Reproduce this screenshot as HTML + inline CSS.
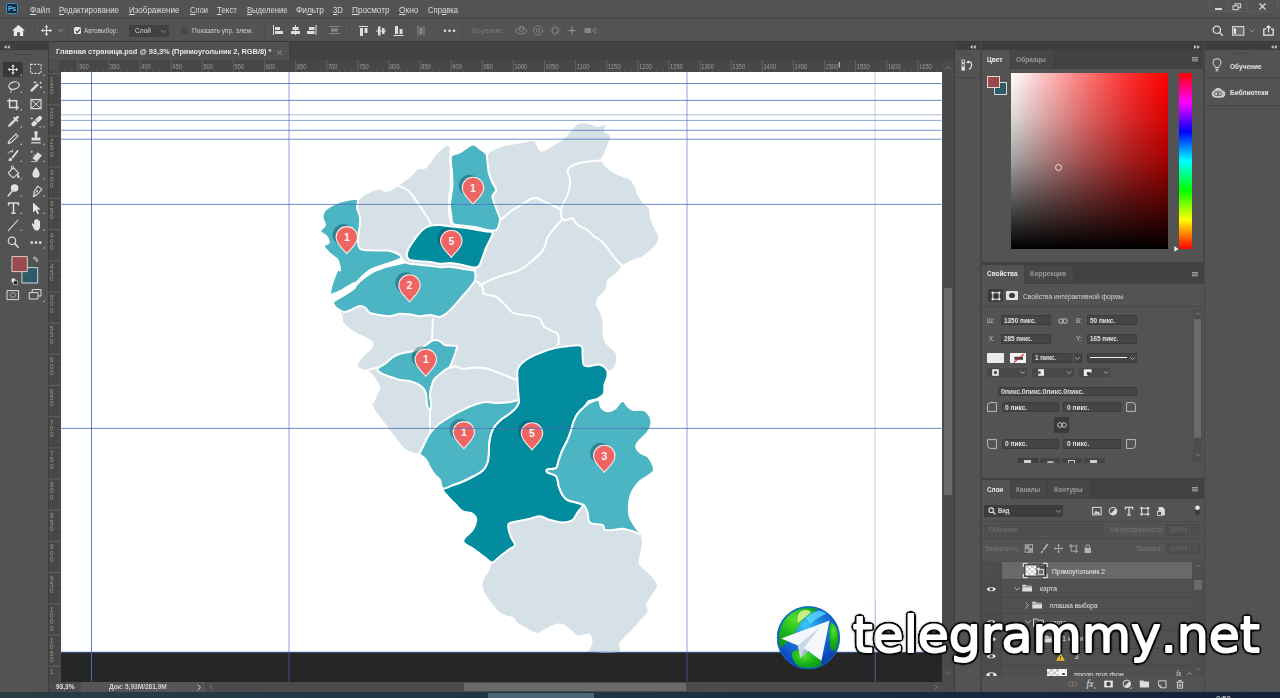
<!DOCTYPE html>
<html lang="ru">
<head>
<meta charset="utf-8">
<title>Главная страница.psd @ 93,3% (Прямоугольник 2, RGB/8)</title>
<style>
*{margin:0;padding:0;box-sizing:border-box}
html,body{width:1280px;height:698px;overflow:hidden;background:#535353}
body{position:relative;font-family:"Liberation Sans",sans-serif;color:#dcdcdc;font-size:8px;line-height:1}
.a{position:absolute}
.t{position:absolute;white-space:nowrap;line-height:10px}
.dim{color:#8e8e8e}
.b{font-weight:bold}
svg{position:absolute;overflow:visible}
.inp{position:absolute;background:#454545;border:1px solid #3c3c3c;border-radius:1px}
.sep{position:absolute;width:1px;background:#4b4b4b}
.pn{font-family:"Liberation Sans",sans-serif;font-weight:bold;font-size:10.5px}
.rl{font-family:"Liberation Sans",sans-serif;font-size:6.3px}
.fx{font-family:"Liberation Serif",serif;font-style:italic;font-size:9.5px}
.wm{font-family:"DejaVu Sans",sans-serif;font-size:50.5px;font-kerning:none}
u{text-decoration:underline;text-underline-offset:1px}
</style>
</head>
<body>
<!-- ===== menu bar ===== -->
<div class="a" style="left:0;top:0;width:1280px;height:18px;background:#535353"></div>
<div class="a" style="left:6px;top:3px;width:12px;height:11px;background:#12293a;border:1px solid #3a8fc4;border-radius:2px"></div>
<div class="t b" style="left:8px;top:3.5px;font-size:7px;color:#63b4e6;letter-spacing:-0.3px">Ps</div>
<div id="menu">
<div class="t" style="transform:scaleX(0.945);transform-origin:0 0;left:30px;top:4.5px;font-size:8.6px"><u>Ф</u>айл</div>
<div class="t" style="transform:scaleX(0.916);transform-origin:0 0;left:58.5px;top:4.5px;font-size:8.6px"><u>Р</u>едактирование</div>
<div class="t" style="transform:scaleX(0.932);transform-origin:0 0;left:128.5px;top:4.5px;font-size:8.6px"><u>И</u>зображение</div>
<div class="t" style="transform:scaleX(0.860);transform-origin:0 0;left:189.5px;top:4.5px;font-size:8.6px"><u>С</u>лои</div>
<div class="t" style="transform:scaleX(0.924);transform-origin:0 0;left:217px;top:4.5px;font-size:8.6px"><u>Т</u>екст</div>
<div class="t" style="transform:scaleX(0.889);transform-origin:0 0;left:246.5px;top:4.5px;font-size:8.6px"><u>В</u>ыделение</div>
<div class="t" style="transform:scaleX(0.969);transform-origin:0 0;left:296px;top:4.5px;font-size:8.6px">Фи<u>л</u>ьтр</div>
<div class="t" style="transform:scaleX(0.909);transform-origin:0 0;left:333px;top:4.5px;font-size:8.6px"><u>3</u>D</div>
<div class="t" style="transform:scaleX(0.955);transform-origin:0 0;left:352px;top:4.5px;font-size:8.6px"><u>П</u>росмотр</div>
<div class="t" style="transform:scaleX(0.976);transform-origin:0 0;left:399px;top:4.5px;font-size:8.6px"><u>О</u>кно</div>
<div class="t" style="transform:scaleX(0.890);transform-origin:0 0;left:428px;top:4.5px;font-size:8.6px">Спр<u>а</u>вка</div>
</div>
<!-- window controls -->
<div class="a" style="left:1209px;top:-1px;width:20px;height:13px;border:1px solid #5e5e5e;border-radius:0 0 0 3px"></div>
<div class="a" style="left:1228px;top:-1px;width:19px;height:13px;border:1px solid #5e5e5e"></div>
<div class="a" style="left:1246px;top:-1px;width:32px;height:13px;border:1px solid #5e5e5e;border-radius:0 0 3px 0"></div>
<div class="a" style="left:1215px;top:7.5px;width:7px;height:2px;background:#d6d6d6"></div>
<svg style="left:1232px;top:3px" width="10" height="8" viewBox="0 0 10 8"><path d="M3.2 2.6V.8H8.6V4.6H6.6" fill="none" stroke="#d0d0d0" stroke-width="1.1"/><rect x="1" y="2.8" width="5.2" height="3.8" fill="none" stroke="#d0d0d0" stroke-width="1.1"/></svg>
<svg style="left:1259px;top:3px" width="7" height="7" viewBox="0 0 7 7"><path d="M.5.5L6.5 6.5M6.5.5L.5 6.5" stroke="#dadada" stroke-width="1.2"/></svg>

<!-- ===== options bar ===== -->
<div class="a" style="left:0;top:18px;width:1280px;height:1px;background:#464646"></div>
<div class="a" style="left:0;top:19px;width:1280px;height:22px;background:#535353"></div>
<div class="a" style="left:0;top:41px;width:1280px;height:1px;background:#3a3a3a"></div>
<!-- home -->
<svg style="left:12px;top:25px" width="13" height="11" viewBox="0 0 13 11"><path d="M6.5 0L13 5.6H11.2V11H7.9V7.2H5.1V11H1.8V5.6H0Z" fill="#e8e8e8"/></svg>
<div class="sep" style="left:34px;top:23px;height:16px"></div>
<!-- move icon -->
<svg style="left:40.5px;top:25px" width="11" height="11" viewBox="0 0 11 11"><path d="M5.5 0L7.4 2.3H6.1V4.9H8.7V3.6L11 5.5L8.7 7.4V6.1H6.1V8.7H7.4L5.5 11L3.6 8.7H4.9V6.1H2.3V7.4L0 5.5L2.3 3.6V4.9H4.9V2.3H3.6Z" fill="#e2e2e2"/></svg>
<svg style="left:58px;top:29px" width="5" height="3" viewBox="0 0 5 3"><path d="M.3.3L2.5 2.5L4.7.3" fill="none" stroke="#a8a8a8" stroke-width=".8"/></svg>
<div class="sep" style="left:68px;top:23px;height:16px"></div>
<!-- checkbox -->
<div class="a" style="left:73.5px;top:26.5px;width:7.5px;height:7.5px;background:#e6e6e6;border-radius:1.5px"></div>
<svg style="left:74.5px;top:27.5px" width="6" height="6" viewBox="0 0 6 6"><path d="M.8 3L2.4 4.6L5.2 1.2" fill="none" stroke="#3a3a3a" stroke-width="1.2"/></svg>
<div class="t" style="transform:scaleX(0.830);transform-origin:0 0;left:84px;top:25.5px;font-size:7.6px;color:#d0d0d0">Автовыбор:</div>
<div class="a" style="left:129px;top:24.5px;width:39.5px;height:12px;background:#414141;border-radius:1.5px"></div>
<div class="t" style="transform:scaleX(0.866);transform-origin:0 0;left:134.5px;top:25.5px;font-size:7.6px;color:#d6d6d6">Слой</div>
<svg style="left:161px;top:29.5px" width="5" height="3" viewBox="0 0 5 3"><path d="M.3.3L2.5 2.5L4.7.3" fill="none" stroke="#a8a8a8" stroke-width=".8"/></svg>
<div class="a" style="left:181px;top:27px;width:7px;height:7px;background:#484848;border-radius:1.5px"></div>
<div class="t" style="transform:scaleX(0.866);transform-origin:0 0;left:191.5px;top:25.5px;font-size:7.6px;color:#d0d0d0">Показать упр. элем.</div>
<div class="sep" style="left:264px;top:23px;height:16px"></div>
<!-- align icons -->
<svg style="left:272px;top:24px" width="190" height="13" viewBox="272 24 190 13" fill="#dedede">
 <rect x="273" y="25" width="1" height="10"/><rect x="275" y="27" width="5" height="3"/><rect x="275" y="31" width="8" height="3"/>
 <rect x="295" y="25" width="1" height="10"/><rect x="292.5" y="27" width="6" height="3"/><rect x="291" y="31" width="9" height="3"/>
 <rect x="315.5" y="25" width="1" height="10"/><rect x="309" y="27" width="5.5" height="3"/><rect x="307" y="31" width="7.5" height="3"/>
 <g fill="#8a8a8a"><rect x="329.5" y="26" width="10" height="1"/><rect x="331" y="28.5" width="7" height="3"/><rect x="329.5" y="33" width="10" height="1"/></g>
 <rect x="359" y="26" width="9" height="1"/><rect x="360" y="28" width="3" height="8"/><rect x="364.5" y="28" width="3" height="5"/>
 <rect x="376" y="30.5" width="10" height="1"/><rect x="378" y="26.5" width="2.5" height="9"/><rect x="382" y="28" width="2.5" height="6"/>
 <rect x="393.5" y="35" width="10" height="1"/><rect x="395" y="26" width="3" height="8"/><rect x="399.5" y="29" width="3" height="5"/>
 <g fill="#8a8a8a"><rect x="417.5" y="26" width="1" height="10"/><rect x="419.5" y="27.5" width="3" height="7"/><rect x="423.5" y="26" width="1" height="10"/></g>
 <circle cx="445" cy="30.8" r="1.3"/><circle cx="449.5" cy="30.8" r="1.3"/><circle cx="454" cy="30.8" r="1.3"/>
</svg>
<div class="sep" style="left:349px;top:23px;height:16px"></div>
<div class="sep" style="left:462px;top:23px;height:16px"></div>
<div class="t" style="transform:scaleX(0.872);transform-origin:0 0;left:470.5px;top:25.5px;font-size:7.6px;color:#7a7a7a">3D-режим:</div>
<svg style="left:512px;top:24px" width="90" height="13" viewBox="512 24 90 13" fill="none" stroke="#848484" stroke-width="1">
 <ellipse cx="521" cy="31" rx="5.5" ry="3"/><circle cx="521.5" cy="28.8" r="2.6"/>
 <circle cx="538" cy="30.5" r="4.6"/><circle cx="538" cy="30.5" r="1.8"/>
 <path d="M555 25.5L557.5 28H552.5ZM555 35.5L557.5 33H552.5ZM550 30.5L552.5 28V33ZM560 30.5L557.5 28V33Z" stroke-width=".8"/>
 <path d="M572 26V35M567.5 30.5H576.5" stroke-width="1.1"/><rect x="570.6" y="29.1" width="2.8" height="2.8" fill="#848484" stroke="none"/>
 <rect x="584.5" y="28" width="6.5" height="5" fill="#848484" stroke="none"/><path d="M592 30.5L595.5 28V33Z" stroke-width=".8"/>
</svg>
<!-- right icons -->
<svg style="left:1212px;top:25px" width="12" height="12" viewBox="0 0 12 12"><circle cx="4.8" cy="4.8" r="3.7" fill="none" stroke="#e0e0e0" stroke-width="1.2"/><path d="M7.6 7.6L10.8 10.8" stroke="#e0e0e0" stroke-width="1.4"/></svg>
<svg style="left:1232px;top:26px" width="13" height="10" viewBox="0 0 13 10"><rect x=".6" y=".6" width="11.2" height="8.6" fill="#6a6a6a" stroke="#d8d8d8" stroke-width="1.1"/><rect x="1.8" y="2.3" width="2.2" height="5.6" fill="#e6e6e6"/></svg>
<svg style="left:1249px;top:29px" width="6" height="4" viewBox="0 0 6 4"><path d="M.4.4L3 3L5.6.4" fill="none" stroke="#9a9a9a" stroke-width=".9"/></svg>
<svg style="left:1263px;top:24.5px" width="11" height="11" viewBox="0 0 11 11"><path d="M3 4.2H.8V10.2H10.2V4.2H8" fill="none" stroke="#e6e6e6" stroke-width="1.3"/><path d="M5.5 7.4V1.4M3.4 3L5.5.8L7.6 3" fill="none" stroke="#e6e6e6" stroke-width="1.2"/></svg>

<!-- ===== strip under options: headers ===== -->
<div class="a" style="left:0;top:42px;width:1280px;height:8px;background:#3e3e3e"></div>
<!-- tools panel -->
<div class="a" style="left:0;top:50px;width:47.5px;height:642px;background:#535353"></div>
<div class="a" style="left:47.5px;top:42px;width:1px;height:650px;background:#3e3e3e"></div>
<svg style="left:4px;top:44.5px" width="6" height="4" viewBox="0 0 6 4" fill="#c8c8c8"><path d="M2.6 0V4L0 2ZM5.8 0V4L3.2 2Z"/></svg>
<div class="a" style="left:15px;top:53.5px;width:17px;height:1px;background:#474747"></div>
<!-- tab bar -->
<div class="a" style="left:48.5px;top:42px;width:905px;height:17.8px;background:#424242"></div>
<div class="a" style="left:48.5px;top:42px;width:240px;height:17.8px;background:#515151"></div>
<div class="t b" style="transform:scaleX(0.947);transform-origin:0 0;left:56px;top:46.5px;font-size:7.9px;color:#e4e4e4;letter-spacing:-.05px">Главная страница.psd @ 93,3% (Прямоугольник 2, RGB/8) *</div>
<svg style="left:277px;top:49.5px" width="5" height="5" viewBox="0 0 5 5"><path d="M.4.4L4.6 4.6M4.6.4L.4 4.6" stroke="#a0a0a0" stroke-width=".9"/></svg>
<!-- ===== tools ===== -->
<div class="a" style="left:3px;top:61.5px;width:20px;height:15.5px;background:#383838;border-radius:1px"></div>
<svg style="left:0;top:56px" width="48" height="250" viewBox="0 56 48 250" fill="none" stroke="#dcdcdc" stroke-width="1.2" stroke-linecap="round" stroke-linejoin="round">
<!-- row1: move / marquee  y=69.5 -->
<path d="M13 64.3L14.8 66.5H13.6V68.9H16V67.7L18.2 69.5L16 71.3V70.1H13.6V72.5H14.8L13 74.7L11.2 72.5H12.4V70.1H10V71.3L7.8 69.5L10 67.7V68.9H12.4V66.5H11.2Z" fill="#e8e8e8" stroke="none"/>
<rect x="30.6" y="64.4" width="10.4" height="9" stroke-dasharray="2 1.4" stroke-width="1.1" stroke-linecap="butt"/>
<!-- row2: lasso / wand  y=86.7 -->
<ellipse cx="14" cy="85.6" rx="5.3" ry="3.6" transform="rotate(-14 14 85.6)"/><path d="M9.6 88.2C9.2 89.6 10.8 90 11.4 89.2C11.6 90.6 11.3 91.6 10.6 92.4" stroke-width="1"/>
<path d="M31 91.2L38 84.2" stroke-width="2.4" stroke-linecap="butt"/><path d="M35 81.6V83M33.6 82.3H36.4M40.6 82V83.6M39.8 82.8H41.4M41 86.6V88M40.3 87.3H41.7" stroke-width=".8"/>
<!-- row3: crop / frame  y=104 -->
<path d="M9.6 98.4V107.6H19M7.2 100.8H16.6V110" stroke-width="1.5" stroke-linecap="butt" stroke-linejoin="miter"/>
<rect x="31" y="99.6" width="10" height="9" stroke-width="1.2"/><path d="M31 99.6L41 108.6M41 99.6L31 108.6" stroke-width="1"/>
<!-- row4: eyedropper / healing  y=121 -->
<path d="M8.6 126.4L9 124.6L14.4 119.2L15.8 120.6L10.4 126Z" fill="#dcdcdc" stroke-width=".6"/><path d="M14 117.6L17.4 121" stroke-width="1.6"/><path d="M15.6 119.2L17.6 117.2" stroke-width="2.6"/>
<path d="M32 124.4L38.4 118A2 2 0 0 1 41.4 121L35 127.4A2 2 0 0 1 32 124.4Z" fill="#dcdcdc" stroke="none" transform="translate(0 -1.6)"/><path d="M34.6 121.4L38 124.8" stroke="#535353" stroke-width=".9" transform="translate(0 -1.6)"/><path d="M31 118.4H32.6M39.6 127H41.2M31.8 117.6V119.2" stroke-width=".7"/>
<!-- row5: pencil / stamp  y=138 -->
<path d="M8.4 143.6L9.2 140.6L16 133.8L18 135.8L11.2 142.6Z" stroke-width="1.1"/><path d="M8.4 143.6L10 143.2L8.8 142Z" fill="#dcdcdc" stroke-width=".6"/>
<path d="M34.4 133.6A1.8 1.8 0 1 1 37.6 133.6L37 137.4H40.4V140.4H31.6V137.4H35Z" fill="#dcdcdc" stroke="none"/><path d="M31.2 142.8H40.8" stroke-width="1.3" stroke-linecap="butt"/>
<!-- row6: history brush / eraser  y=156 -->
<path d="M8.6 161C8.6 159 9.4 158.2 10.6 157.6L12.4 159.4C12 160.6 10.8 161.4 8.6 161Z" fill="#dcdcdc" stroke="none"/><path d="M12.6 157.4L17.6 151" stroke-width="1.8"/><path d="M8 153.6A3.4 3.4 0 0 1 12.4 151.4M12.6 150V151.8H10.8" stroke-width=".8"/>
<path d="M32.4 158.2L37.6 152.2L42 155.6L36.8 161.6Z" fill="#dcdcdc" stroke="none"/><path d="M31.4 161.6H37" stroke-width=".8"/><path d="M31 151.8H32.4M31.7 151.1V152.5M33.4 155H34.4" stroke-width=".7"/>
<!-- row7: bucket / blur  y=173 -->
<path d="M9 172L13.4 167.6L18.6 172.8L14.2 177.2C13.6 177.8 12.8 177.8 12.2 177.2L9 174C8.4 173.4 8.4 172.6 9 172Z" stroke-width="1.1"/><path d="M11.4 169.6V166.8C11.4 165.6 13.4 165.6 13.4 166.8V169" stroke-width=".9"/><path d="M17.8 173.4C19 175 19.6 176 19.6 176.8A1.2 1.2 0 0 1 17.2 176.8C17.2 176 17.4 175 17.8 173.4Z" fill="#dcdcdc" stroke="none"/>
<path d="M36 167C38 170 39.6 172.2 39.6 174.2A3.6 3.6 0 0 1 32.4 174.2C32.4 172.2 34 170 36 167Z" fill="#e2e2e2" stroke="none"/>
<!-- row8: dodge / pen  y=191 -->
<circle cx="14.6" cy="188" r="3.8" fill="#e2e2e2" stroke="none"/><path d="M12.2 191L8.2 196" stroke-width="1.6"/>
<path d="M33 196.4L34 191.2L38.4 186.4L42 190L37.2 194.4Z" stroke-width="1.1" transform="rotate(-8 36 191)"/><circle cx="37" cy="191" r="1" fill="#dcdcdc" stroke="none"/><path d="M33 196.4L36.4 191.8" stroke-width=".8"/>
<!-- row9: type / path select  y=208 -->
<path d="M8.6 205.6V203H18.4V205.6M13.5 203V213M11.4 213.2H15.6" stroke-width="1.5" stroke-linecap="butt" stroke-linejoin="miter"/>
<path d="M33 202.4V212.6L35.6 210.2L37.4 214.2L39 213.4L37.2 209.6H40.6Z" fill="#e6e6e6" stroke="none"/>
<!-- row10: line / hand  y=225 -->
<path d="M8.4 230.6L18 220" stroke-width="1.1"/>
<path d="M32.6 226C32 224.8 31.2 224 32 223.4C32.8 222.8 33.6 224 34.2 224.8V220.4C34.2 219.4 35.6 219.4 35.6 220.4V219.4C35.6 218.4 37.1 218.4 37.1 219.4V220C37.1 219 38.6 219 38.6 220V221.2C38.6 220.4 40 220.4 40 221.4V226.4C40 229 38.6 230.6 36.6 230.6C34.4 230.6 33.6 228.6 32.6 226Z" fill="#e2e2e2" stroke="none"/>
<!-- row11: zoom / more  y=242.7 -->
<circle cx="12" cy="240.8" r="3.7" stroke-width="1.2"/><path d="M14.8 243.6L18.2 247.2" stroke-width="1.6"/>
<g fill="#e2e2e2" stroke="none"><circle cx="31.8" cy="242.6" r="1.3"/><circle cx="36" cy="242.6" r="1.3"/><circle cx="40.2" cy="242.6" r="1.3"/></g>
<!-- corner triangles -->
<g fill="#b4b4b4" stroke="none">
<path d="M22 74V76H20ZM44.6 74V76H42.6ZM22 91V93H20ZM44.6 91V93H42.6ZM22 108.4V110.4H20ZM22 125.6V127.6H20ZM44.6 125.6V127.6H42.6ZM22 143V145H20ZM44.6 143V145H42.6ZM22 160V162H20ZM44.6 160V162H42.6ZM22 177.4V179.4H20ZM44.6 177.4V179.4H42.6ZM22 194.6V196.6H20ZM44.6 194.6V196.6H42.6ZM22 212V214H20ZM44.6 212V214H42.6ZM22 229V231H20ZM44.6 229V231H42.6ZM44.6 246.4V248.4H42.6ZM44.6 300V302H42.6Z"/>
</g>
<!-- swatches -->
<rect x="22.3" y="267.6" width="15.4" height="15.4" fill="#2e5c66" stroke="#e0e0e0" stroke-width=".9"/>
<rect x="12.3" y="256.6" width="15" height="15" fill="#9a4a50" stroke="#e6dcd4" stroke-width=".9"/>
<path d="M33.6 258H36.8V261.4M35.4 260L36.8 261.6L38.2 260M34.8 256.8L33.4 258L34.8 259.2" stroke-width=".8"/>
<rect x="11.6" y="278.6" width="3.6" height="3.6" fill="#e6e6e6" stroke="none"/><rect x="13.8" y="280.8" width="3.8" height="3.8" fill="#1e1e1e" stroke="#e6e6e6" stroke-width=".6"/>
<!-- quick mask / screen mode -->
<rect x="7.4" y="290.6" width="11.2" height="9" stroke-width="1"/><ellipse cx="13" cy="295" rx="2.8" ry="2.2" stroke-width=".7" stroke-dasharray="1 .8"/>
<rect x="32.6" y="289.6" width="8.4" height="6.4" stroke-width="1"/><rect x="29.6" y="292.6" width="8.4" height="6.4" fill="#535353" stroke-width="1"/>
</svg>
<!-- ===== document window ===== -->
<div class="a" style="left:48.5px;top:59.7px;width:905px;height:12.5px;background:#474747"></div>
<div class="a" style="left:48.5px;top:59.7px;width:12px;height:622px;background:#474747"></div>
<div class="a" style="left:49px;top:60.5px;width:10.3px;height:10.8px;background:#4f4f4f"></div>
<div class="a" style="left:60.5px;top:72px;width:881px;height:580px;background:#fff"></div>
<div class="a" style="left:60.5px;top:652px;width:881px;height:29.5px;background:#262626"></div>
<div class="a" style="left:941.5px;top:60.5px;width:12px;height:621px;background:#4a4a4a"></div>
<div class="a" style="left:943.5px;top:288px;width:8.5px;height:206.5px;background:#6a6a6a"></div>
<svg style="left:944px;top:66px" width="7" height="4" viewBox="0 0 7 4"><path d="M.5 3.5L3.5.7L6.5 3.5" fill="none" stroke="#7c7c7c" stroke-width=".9"/></svg>
<svg style="left:944px;top:671px" width="7" height="4" viewBox="0 0 7 4"><path d="M.5.5L3.5 3.3L6.5.5" fill="none" stroke="#7c7c7c" stroke-width=".9"/></svg>
<div class="a" style="left:953.5px;top:42px;width:1px;height:650px;background:#3e3e3e"></div>
<svg style="left:0;top:0;opacity:.99" width="960" height="698" viewBox="0 0 960 698">
<g stroke="#686868" stroke-width=".8">
<path d="M65.5 69.5V72" stroke="#5c5c5c"/>
<path d="M71.7 69.5V72" stroke="#5c5c5c"/>
<path d="M77.9 59.8V72"/>
<path d="M84.1 69.5V72" stroke="#5c5c5c"/>
<path d="M90.3 69.5V72" stroke="#5c5c5c"/>
<path d="M96.6 69.5V72" stroke="#5c5c5c"/>
<path d="M102.8 69.5V72" stroke="#5c5c5c"/>
<path d="M109.0 59.8V72"/>
<path d="M115.2 69.5V72" stroke="#5c5c5c"/>
<path d="M121.5 69.5V72" stroke="#5c5c5c"/>
<path d="M127.7 69.5V72" stroke="#5c5c5c"/>
<path d="M133.9 69.5V72" stroke="#5c5c5c"/>
<path d="M140.1 59.8V72"/>
<path d="M146.3 69.5V72" stroke="#5c5c5c"/>
<path d="M152.6 69.5V72" stroke="#5c5c5c"/>
<path d="M158.8 69.5V72" stroke="#5c5c5c"/>
<path d="M165.0 69.5V72" stroke="#5c5c5c"/>
<path d="M171.2 59.8V72"/>
<path d="M177.5 69.5V72" stroke="#5c5c5c"/>
<path d="M183.7 69.5V72" stroke="#5c5c5c"/>
<path d="M189.9 69.5V72" stroke="#5c5c5c"/>
<path d="M196.1 69.5V72" stroke="#5c5c5c"/>
<path d="M202.3 59.8V72"/>
<path d="M208.6 69.5V72" stroke="#5c5c5c"/>
<path d="M214.8 69.5V72" stroke="#5c5c5c"/>
<path d="M221.0 69.5V72" stroke="#5c5c5c"/>
<path d="M227.2 69.5V72" stroke="#5c5c5c"/>
<path d="M233.4 59.8V72"/>
<path d="M239.7 69.5V72" stroke="#5c5c5c"/>
<path d="M245.9 69.5V72" stroke="#5c5c5c"/>
<path d="M252.1 69.5V72" stroke="#5c5c5c"/>
<path d="M258.3 69.5V72" stroke="#5c5c5c"/>
<path d="M264.6 59.8V72"/>
<path d="M270.8 69.5V72" stroke="#5c5c5c"/>
<path d="M277.0 69.5V72" stroke="#5c5c5c"/>
<path d="M283.2 69.5V72" stroke="#5c5c5c"/>
<path d="M289.4 69.5V72" stroke="#5c5c5c"/>
<path d="M295.7 59.8V72"/>
<path d="M301.9 69.5V72" stroke="#5c5c5c"/>
<path d="M308.1 69.5V72" stroke="#5c5c5c"/>
<path d="M314.3 69.5V72" stroke="#5c5c5c"/>
<path d="M320.6 69.5V72" stroke="#5c5c5c"/>
<path d="M326.8 59.8V72"/>
<path d="M333.0 69.5V72" stroke="#5c5c5c"/>
<path d="M339.2 69.5V72" stroke="#5c5c5c"/>
<path d="M345.4 69.5V72" stroke="#5c5c5c"/>
<path d="M351.7 69.5V72" stroke="#5c5c5c"/>
<path d="M357.9 59.8V72"/>
<path d="M364.1 69.5V72" stroke="#5c5c5c"/>
<path d="M370.3 69.5V72" stroke="#5c5c5c"/>
<path d="M376.6 69.5V72" stroke="#5c5c5c"/>
<path d="M382.8 69.5V72" stroke="#5c5c5c"/>
<path d="M389.0 59.8V72"/>
<path d="M395.2 69.5V72" stroke="#5c5c5c"/>
<path d="M401.4 69.5V72" stroke="#5c5c5c"/>
<path d="M407.7 69.5V72" stroke="#5c5c5c"/>
<path d="M413.9 69.5V72" stroke="#5c5c5c"/>
<path d="M420.1 59.8V72"/>
<path d="M426.3 69.5V72" stroke="#5c5c5c"/>
<path d="M432.6 69.5V72" stroke="#5c5c5c"/>
<path d="M438.8 69.5V72" stroke="#5c5c5c"/>
<path d="M445.0 69.5V72" stroke="#5c5c5c"/>
<path d="M451.2 59.8V72"/>
<path d="M457.4 69.5V72" stroke="#5c5c5c"/>
<path d="M463.7 69.5V72" stroke="#5c5c5c"/>
<path d="M469.9 69.5V72" stroke="#5c5c5c"/>
<path d="M476.1 69.5V72" stroke="#5c5c5c"/>
<path d="M482.3 59.8V72"/>
<path d="M488.6 69.5V72" stroke="#5c5c5c"/>
<path d="M494.8 69.5V72" stroke="#5c5c5c"/>
<path d="M501.0 69.5V72" stroke="#5c5c5c"/>
<path d="M507.2 69.5V72" stroke="#5c5c5c"/>
<path d="M513.4 59.8V72"/>
<path d="M519.7 69.5V72" stroke="#5c5c5c"/>
<path d="M525.9 69.5V72" stroke="#5c5c5c"/>
<path d="M532.1 69.5V72" stroke="#5c5c5c"/>
<path d="M538.3 69.5V72" stroke="#5c5c5c"/>
<path d="M544.5 59.8V72"/>
<path d="M550.8 69.5V72" stroke="#5c5c5c"/>
<path d="M557.0 69.5V72" stroke="#5c5c5c"/>
<path d="M563.2 69.5V72" stroke="#5c5c5c"/>
<path d="M569.4 69.5V72" stroke="#5c5c5c"/>
<path d="M575.7 59.8V72"/>
<path d="M581.9 69.5V72" stroke="#5c5c5c"/>
<path d="M588.1 69.5V72" stroke="#5c5c5c"/>
<path d="M594.3 69.5V72" stroke="#5c5c5c"/>
<path d="M600.5 69.5V72" stroke="#5c5c5c"/>
<path d="M606.8 59.8V72"/>
<path d="M613.0 69.5V72" stroke="#5c5c5c"/>
<path d="M619.2 69.5V72" stroke="#5c5c5c"/>
<path d="M625.4 69.5V72" stroke="#5c5c5c"/>
<path d="M631.7 69.5V72" stroke="#5c5c5c"/>
<path d="M637.9 59.8V72"/>
<path d="M644.1 69.5V72" stroke="#5c5c5c"/>
<path d="M650.3 69.5V72" stroke="#5c5c5c"/>
<path d="M656.5 69.5V72" stroke="#5c5c5c"/>
<path d="M662.8 69.5V72" stroke="#5c5c5c"/>
<path d="M669.0 59.8V72"/>
<path d="M675.2 69.5V72" stroke="#5c5c5c"/>
<path d="M681.4 69.5V72" stroke="#5c5c5c"/>
<path d="M687.7 69.5V72" stroke="#5c5c5c"/>
<path d="M693.9 69.5V72" stroke="#5c5c5c"/>
<path d="M700.1 59.8V72"/>
<path d="M706.3 69.5V72" stroke="#5c5c5c"/>
<path d="M712.5 69.5V72" stroke="#5c5c5c"/>
<path d="M718.8 69.5V72" stroke="#5c5c5c"/>
<path d="M725.0 69.5V72" stroke="#5c5c5c"/>
<path d="M731.2 59.8V72"/>
<path d="M737.4 69.5V72" stroke="#5c5c5c"/>
<path d="M743.7 69.5V72" stroke="#5c5c5c"/>
<path d="M749.9 69.5V72" stroke="#5c5c5c"/>
<path d="M756.1 69.5V72" stroke="#5c5c5c"/>
<path d="M762.3 59.8V72"/>
<path d="M768.5 69.5V72" stroke="#5c5c5c"/>
<path d="M774.8 69.5V72" stroke="#5c5c5c"/>
<path d="M781.0 69.5V72" stroke="#5c5c5c"/>
<path d="M787.2 69.5V72" stroke="#5c5c5c"/>
<path d="M793.4 59.8V72"/>
<path d="M799.7 69.5V72" stroke="#5c5c5c"/>
<path d="M805.9 69.5V72" stroke="#5c5c5c"/>
<path d="M812.1 69.5V72" stroke="#5c5c5c"/>
<path d="M818.3 69.5V72" stroke="#5c5c5c"/>
<path d="M824.5 59.8V72"/>
<path d="M830.8 69.5V72" stroke="#5c5c5c"/>
<path d="M837.0 69.5V72" stroke="#5c5c5c"/>
<path d="M843.2 69.5V72" stroke="#5c5c5c"/>
<path d="M849.4 69.5V72" stroke="#5c5c5c"/>
<path d="M855.6 59.8V72"/>
<path d="M861.9 69.5V72" stroke="#5c5c5c"/>
<path d="M868.1 69.5V72" stroke="#5c5c5c"/>
<path d="M874.3 69.5V72" stroke="#5c5c5c"/>
<path d="M880.5 69.5V72" stroke="#5c5c5c"/>
<path d="M886.8 59.8V72"/>
<path d="M893.0 69.5V72" stroke="#5c5c5c"/>
<path d="M899.2 69.5V72" stroke="#5c5c5c"/>
<path d="M905.4 69.5V72" stroke="#5c5c5c"/>
<path d="M911.6 69.5V72" stroke="#5c5c5c"/>
<path d="M917.9 59.8V72"/>
<path d="M924.1 69.5V72" stroke="#5c5c5c"/>
<path d="M930.3 69.5V72" stroke="#5c5c5c"/>
<path d="M936.5 69.5V72" stroke="#5c5c5c"/>
<path d="M48.5 73.7H60.5"/>
<path d="M58 79.9H60.5" stroke="#5c5c5c"/>
<path d="M58 86.2H60.5" stroke="#5c5c5c"/>
<path d="M58 92.4H60.5" stroke="#5c5c5c"/>
<path d="M58 98.6H60.5" stroke="#5c5c5c"/>
<path d="M48.5 104.9H60.5"/>
<path d="M58 111.1H60.5" stroke="#5c5c5c"/>
<path d="M58 117.4H60.5" stroke="#5c5c5c"/>
<path d="M58 123.6H60.5" stroke="#5c5c5c"/>
<path d="M58 129.8H60.5" stroke="#5c5c5c"/>
<path d="M48.5 136.1H60.5"/>
<path d="M58 142.3H60.5" stroke="#5c5c5c"/>
<path d="M58 148.5H60.5" stroke="#5c5c5c"/>
<path d="M58 154.8H60.5" stroke="#5c5c5c"/>
<path d="M58 161.0H60.5" stroke="#5c5c5c"/>
<path d="M48.5 167.2H60.5"/>
<path d="M58 173.5H60.5" stroke="#5c5c5c"/>
<path d="M58 179.7H60.5" stroke="#5c5c5c"/>
<path d="M58 185.9H60.5" stroke="#5c5c5c"/>
<path d="M58 192.2H60.5" stroke="#5c5c5c"/>
<path d="M48.5 198.4H60.5"/>
<path d="M58 204.7H60.5" stroke="#5c5c5c"/>
<path d="M58 210.9H60.5" stroke="#5c5c5c"/>
<path d="M58 217.1H60.5" stroke="#5c5c5c"/>
<path d="M58 223.4H60.5" stroke="#5c5c5c"/>
<path d="M48.5 229.6H60.5"/>
<path d="M58 235.8H60.5" stroke="#5c5c5c"/>
<path d="M58 242.1H60.5" stroke="#5c5c5c"/>
<path d="M58 248.3H60.5" stroke="#5c5c5c"/>
<path d="M58 254.5H60.5" stroke="#5c5c5c"/>
<path d="M48.5 260.8H60.5"/>
<path d="M58 267.0H60.5" stroke="#5c5c5c"/>
<path d="M58 273.3H60.5" stroke="#5c5c5c"/>
<path d="M58 279.5H60.5" stroke="#5c5c5c"/>
<path d="M58 285.7H60.5" stroke="#5c5c5c"/>
<path d="M48.5 292.0H60.5"/>
<path d="M58 298.2H60.5" stroke="#5c5c5c"/>
<path d="M58 304.4H60.5" stroke="#5c5c5c"/>
<path d="M58 310.7H60.5" stroke="#5c5c5c"/>
<path d="M58 316.9H60.5" stroke="#5c5c5c"/>
<path d="M48.5 323.1H60.5"/>
<path d="M58 329.4H60.5" stroke="#5c5c5c"/>
<path d="M58 335.6H60.5" stroke="#5c5c5c"/>
<path d="M58 341.8H60.5" stroke="#5c5c5c"/>
<path d="M58 348.1H60.5" stroke="#5c5c5c"/>
<path d="M48.5 354.3H60.5"/>
<path d="M58 360.6H60.5" stroke="#5c5c5c"/>
<path d="M58 366.8H60.5" stroke="#5c5c5c"/>
<path d="M58 373.0H60.5" stroke="#5c5c5c"/>
<path d="M58 379.3H60.5" stroke="#5c5c5c"/>
<path d="M48.5 385.5H60.5"/>
<path d="M58 391.7H60.5" stroke="#5c5c5c"/>
<path d="M58 398.0H60.5" stroke="#5c5c5c"/>
<path d="M58 404.2H60.5" stroke="#5c5c5c"/>
<path d="M58 410.4H60.5" stroke="#5c5c5c"/>
<path d="M48.5 416.7H60.5"/>
<path d="M58 422.9H60.5" stroke="#5c5c5c"/>
<path d="M58 429.2H60.5" stroke="#5c5c5c"/>
<path d="M58 435.4H60.5" stroke="#5c5c5c"/>
<path d="M58 441.6H60.5" stroke="#5c5c5c"/>
<path d="M48.5 447.9H60.5"/>
<path d="M58 454.1H60.5" stroke="#5c5c5c"/>
<path d="M58 460.3H60.5" stroke="#5c5c5c"/>
<path d="M58 466.6H60.5" stroke="#5c5c5c"/>
<path d="M58 472.8H60.5" stroke="#5c5c5c"/>
<path d="M48.5 479.0H60.5"/>
<path d="M58 485.3H60.5" stroke="#5c5c5c"/>
<path d="M58 491.5H60.5" stroke="#5c5c5c"/>
<path d="M58 497.7H60.5" stroke="#5c5c5c"/>
<path d="M58 504.0H60.5" stroke="#5c5c5c"/>
<path d="M48.5 510.2H60.5"/>
<path d="M58 516.5H60.5" stroke="#5c5c5c"/>
<path d="M58 522.7H60.5" stroke="#5c5c5c"/>
<path d="M58 528.9H60.5" stroke="#5c5c5c"/>
<path d="M58 535.2H60.5" stroke="#5c5c5c"/>
<path d="M48.5 541.4H60.5"/>
<path d="M58 547.6H60.5" stroke="#5c5c5c"/>
<path d="M58 553.9H60.5" stroke="#5c5c5c"/>
<path d="M58 560.1H60.5" stroke="#5c5c5c"/>
<path d="M58 566.3H60.5" stroke="#5c5c5c"/>
<path d="M48.5 572.6H60.5"/>
<path d="M58 578.8H60.5" stroke="#5c5c5c"/>
<path d="M58 585.1H60.5" stroke="#5c5c5c"/>
<path d="M58 591.3H60.5" stroke="#5c5c5c"/>
<path d="M58 597.5H60.5" stroke="#5c5c5c"/>
<path d="M48.5 603.8H60.5"/>
<path d="M58 610.0H60.5" stroke="#5c5c5c"/>
<path d="M58 616.2H60.5" stroke="#5c5c5c"/>
<path d="M58 622.5H60.5" stroke="#5c5c5c"/>
<path d="M58 628.7H60.5" stroke="#5c5c5c"/>
<path d="M48.5 634.9H60.5"/>
<path d="M58 641.2H60.5" stroke="#5c5c5c"/>
<path d="M58 647.4H60.5" stroke="#5c5c5c"/>
<path d="M58 653.6H60.5" stroke="#5c5c5c"/>
<path d="M58 659.9H60.5" stroke="#5c5c5c"/>
<path d="M48.5 666.1H60.5"/>
<path d="M58 672.4H60.5" stroke="#5c5c5c"/>
<path d="M58 678.6H60.5" stroke="#5c5c5c"/>
</g>
<path d="M839.3 62V67.5" stroke="#e0e0e0" stroke-width=".9"/>
<g class="rl" fill="#9c9c9c">
<text x="79.0" y="68.6" textLength="9.6" lengthAdjust="spacingAndGlyphs">300</text>
<text x="110.1" y="68.6" textLength="9.6" lengthAdjust="spacingAndGlyphs">350</text>
<text x="141.2" y="68.6" textLength="9.6" lengthAdjust="spacingAndGlyphs">400</text>
<text x="172.3" y="68.6" textLength="9.6" lengthAdjust="spacingAndGlyphs">450</text>
<text x="203.4" y="68.6" textLength="9.6" lengthAdjust="spacingAndGlyphs">500</text>
<text x="234.5" y="68.6" textLength="9.6" lengthAdjust="spacingAndGlyphs">550</text>
<text x="265.7" y="68.6" textLength="9.6" lengthAdjust="spacingAndGlyphs">600</text>
<text x="296.8" y="68.6" textLength="9.6" lengthAdjust="spacingAndGlyphs">650</text>
<text x="327.9" y="68.6" textLength="9.6" lengthAdjust="spacingAndGlyphs">700</text>
<text x="359.0" y="68.6" textLength="9.6" lengthAdjust="spacingAndGlyphs">750</text>
<text x="390.1" y="68.6" textLength="9.6" lengthAdjust="spacingAndGlyphs">800</text>
<text x="421.2" y="68.6" textLength="9.6" lengthAdjust="spacingAndGlyphs">850</text>
<text x="452.3" y="68.6" textLength="9.6" lengthAdjust="spacingAndGlyphs">900</text>
<text x="483.4" y="68.6" textLength="9.6" lengthAdjust="spacingAndGlyphs">950</text>
<text x="514.5" y="68.6" textLength="12.8" lengthAdjust="spacingAndGlyphs">1000</text>
<text x="545.6" y="68.6" textLength="12.8" lengthAdjust="spacingAndGlyphs">1050</text>
<text x="576.8" y="68.6" textLength="12.8" lengthAdjust="spacingAndGlyphs">1100</text>
<text x="607.9" y="68.6" textLength="12.8" lengthAdjust="spacingAndGlyphs">1150</text>
<text x="639.0" y="68.6" textLength="12.8" lengthAdjust="spacingAndGlyphs">1200</text>
<text x="670.1" y="68.6" textLength="12.8" lengthAdjust="spacingAndGlyphs">1250</text>
<text x="701.2" y="68.6" textLength="12.8" lengthAdjust="spacingAndGlyphs">1300</text>
<text x="732.3" y="68.6" textLength="12.8" lengthAdjust="spacingAndGlyphs">1350</text>
<text x="763.4" y="68.6" textLength="12.8" lengthAdjust="spacingAndGlyphs">1400</text>
<text x="794.5" y="68.6" textLength="12.8" lengthAdjust="spacingAndGlyphs">1450</text>
<text x="825.6" y="68.6" textLength="12.8" lengthAdjust="spacingAndGlyphs">1500</text>
<text x="856.8" y="68.6" textLength="12.8" lengthAdjust="spacingAndGlyphs">1550</text>
<text x="887.9" y="68.6" textLength="12.8" lengthAdjust="spacingAndGlyphs">1600</text>
<text x="919.0" y="68.6" textLength="12.8" lengthAdjust="spacingAndGlyphs">1650</text>
<text x="51.8" y="81.7" text-anchor="middle">1</text>
<text x="51.8" y="88.0" text-anchor="middle">5</text>
<text x="51.8" y="94.3" text-anchor="middle">0</text>
<text x="51.8" y="112.9" text-anchor="middle">2</text>
<text x="51.8" y="119.2" text-anchor="middle">0</text>
<text x="51.8" y="125.5" text-anchor="middle">0</text>
<text x="51.8" y="144.1" text-anchor="middle">2</text>
<text x="51.8" y="150.4" text-anchor="middle">5</text>
<text x="51.8" y="156.7" text-anchor="middle">0</text>
<text x="51.8" y="175.2" text-anchor="middle">3</text>
<text x="51.8" y="181.5" text-anchor="middle">0</text>
<text x="51.8" y="187.8" text-anchor="middle">0</text>
<text x="51.8" y="206.4" text-anchor="middle">3</text>
<text x="51.8" y="212.7" text-anchor="middle">5</text>
<text x="51.8" y="219.0" text-anchor="middle">0</text>
<text x="51.8" y="237.6" text-anchor="middle">4</text>
<text x="51.8" y="243.9" text-anchor="middle">0</text>
<text x="51.8" y="250.2" text-anchor="middle">0</text>
<text x="51.8" y="268.8" text-anchor="middle">4</text>
<text x="51.8" y="275.1" text-anchor="middle">5</text>
<text x="51.8" y="281.4" text-anchor="middle">0</text>
<text x="51.8" y="300.0" text-anchor="middle">5</text>
<text x="51.8" y="306.3" text-anchor="middle">0</text>
<text x="51.8" y="312.6" text-anchor="middle">0</text>
<text x="51.8" y="331.1" text-anchor="middle">5</text>
<text x="51.8" y="337.4" text-anchor="middle">5</text>
<text x="51.8" y="343.7" text-anchor="middle">0</text>
<text x="51.8" y="362.3" text-anchor="middle">6</text>
<text x="51.8" y="368.6" text-anchor="middle">0</text>
<text x="51.8" y="374.9" text-anchor="middle">0</text>
<text x="51.8" y="393.5" text-anchor="middle">6</text>
<text x="51.8" y="399.8" text-anchor="middle">5</text>
<text x="51.8" y="406.1" text-anchor="middle">0</text>
<text x="51.8" y="424.7" text-anchor="middle">7</text>
<text x="51.8" y="431.0" text-anchor="middle">0</text>
<text x="51.8" y="437.3" text-anchor="middle">0</text>
<text x="51.8" y="455.9" text-anchor="middle">7</text>
<text x="51.8" y="462.2" text-anchor="middle">5</text>
<text x="51.8" y="468.5" text-anchor="middle">0</text>
<text x="51.8" y="487.0" text-anchor="middle">8</text>
<text x="51.8" y="493.3" text-anchor="middle">0</text>
<text x="51.8" y="499.6" text-anchor="middle">0</text>
<text x="51.8" y="518.2" text-anchor="middle">8</text>
<text x="51.8" y="524.5" text-anchor="middle">5</text>
<text x="51.8" y="530.8" text-anchor="middle">0</text>
<text x="51.8" y="549.4" text-anchor="middle">9</text>
<text x="51.8" y="555.7" text-anchor="middle">0</text>
<text x="51.8" y="562.0" text-anchor="middle">0</text>
<text x="51.8" y="580.6" text-anchor="middle">9</text>
<text x="51.8" y="586.9" text-anchor="middle">5</text>
<text x="51.8" y="593.2" text-anchor="middle">0</text>
<text x="51.8" y="611.8" text-anchor="middle">1</text>
<text x="51.8" y="618.1" text-anchor="middle">0</text>
<text x="51.8" y="624.4" text-anchor="middle">0</text>
<text x="51.8" y="630.7" text-anchor="middle">0</text>
<text x="51.8" y="642.9" text-anchor="middle">1</text>
<text x="51.8" y="649.2" text-anchor="middle">0</text>
<text x="51.8" y="655.5" text-anchor="middle">5</text>
<text x="51.8" y="661.8" text-anchor="middle">0</text>
<text x="51.8" y="674.1" text-anchor="middle">1</text>
</g>
</svg>
<svg style="left:0;top:0" width="960" height="698" viewBox="0 0 960 698">
<path d="M335 203.8C338.2 202.3 341.4 201.2 345 200.5C348.6 199.8 355.4 199.4 357.5 199.5C359.6 199.6 356.8 201.9 358 201.2C359.2 200.5 362.3 196.7 365 195C367.7 193.3 372.6 191.4 375 190.5C377.4 189.6 378.4 189.3 380 189.5C381.6 189.7 383.0 191.9 385 192C387.0 192.1 390.3 191.0 392.5 190C394.7 189.0 396.0 187.8 398.8 185.8C401.6 183.8 407.0 180.0 410 177.5C413.0 175.0 415.1 171.4 417.5 170C419.9 168.6 423.0 169.8 425 168.8C427.0 167.8 428.2 166.0 430 163.8C431.8 161.6 434.4 157.2 436.2 155C438.0 152.8 439.6 151.4 441.2 150C442.8 148.6 444.9 146.6 446.2 146.2C447.5 145.8 448.8 146.0 449.5 147.5C450.2 149.0 448.8 154.7 450.5 155.5C452.2 156.3 456.5 154.3 460 152.5C463.5 150.7 469.3 145.1 472.5 144.5C475.7 143.9 477.8 147.3 480 148.8C482.2 150.3 484.9 152.8 486.2 153.8C487.5 154.8 487.4 155.2 488 155C488.6 154.8 488.1 153.7 490 152.5C491.9 151.3 496.8 148.7 500 147.5C503.2 146.3 506.4 145.7 510 145C513.6 144.3 518.7 143.6 522.5 143C526.3 142.4 531.2 140.1 533.8 141.2C536.4 142.3 537.2 148.4 538.8 150C540.4 151.6 541.6 151.8 543.8 151.2C546.0 150.6 549.5 148.0 552.5 146.2C555.5 144.4 559.5 142.4 562.5 140C565.5 137.6 568.8 133.7 571.2 131.2C573.6 128.7 574.9 125.7 577.5 124.5C580.1 123.3 584.3 123.4 587.5 123.8C590.7 124.2 594.7 126.8 597.5 127C600.3 127.2 604.0 124.3 605 125C606.0 125.7 603.0 129.4 603.8 131.2C604.6 133.0 609.4 134.0 610 136.2C610.6 138.4 608.5 142.2 607.5 145C606.5 147.8 604.8 151.4 603.8 153.8C602.8 156.2 601.0 158.0 601.2 160C601.4 162.0 603.2 164.2 605 166.2C606.8 168.2 609.7 170.8 612.5 172.5C615.3 174.2 619.7 175.8 622.5 177C625.3 178.2 628.0 178.3 630 180C632.0 181.7 633.8 185.1 635 187.5C636.2 189.9 636.3 192.6 637.5 195C638.7 197.4 640.7 200.3 642.5 202.5C644.3 204.7 647.6 206.4 648.8 208.8C650.0 211.2 649.2 214.5 650 217.5C650.8 220.5 652.5 224.5 653.8 227.5C655.1 230.5 657.6 233.6 658 236.2C658.4 238.8 657.5 241.6 656.2 243.8C654.9 246.0 652.2 248.0 650 250C647.8 252.0 644.9 254.8 642.5 256.2C640.1 257.6 637.4 257.8 635 258.8C632.6 259.8 629.5 261.5 627.5 262.5C625.5 263.5 623.9 263.8 622.5 265C621.1 266.2 620.0 268.6 618.8 270C617.6 271.4 616.8 272.2 615 273.8C613.2 275.4 609.1 277.4 607.5 280C605.9 282.6 606.6 287.2 605 290C603.4 292.8 598.9 295.1 597.5 297.5C596.1 299.9 595.8 302.6 596.2 305C596.6 307.4 599.0 309.7 600 312.5C601.0 315.3 602.1 319.3 602.5 322.5C602.9 325.7 602.1 329.3 602.5 332.5C602.9 335.7 603.4 339.7 605 342.5C606.6 345.3 610.7 348.0 612.5 350C614.3 352.0 615.8 352.6 616.2 355C616.6 357.4 615.8 362.6 615 365C614.2 367.4 612.4 369.0 611.2 370C610.0 371.0 608.1 370.2 607.5 371.2C606.9 372.2 608.0 374.0 607.5 376.2C607.0 378.4 605.1 382.2 604.5 385C603.9 387.8 604.7 391.6 603.8 393.8C602.9 396.0 599.6 397.8 598.8 398.8C598.0 399.8 598.4 398.6 598.8 400C599.2 401.4 599.8 405.7 601.2 407.5C602.6 409.3 605.3 411.0 607.5 411.2C609.7 411.4 613.0 410.2 615 408.8C617.0 407.4 618.6 403.7 620 402.5C621.4 401.3 622.6 400.6 623.8 401.2C625.0 401.8 625.9 404.8 627.5 406.2C629.1 407.6 631.2 409.4 633.8 410C636.4 410.6 641.2 409.0 643.8 410C646.4 411.0 648.8 413.8 650 416.2C651.2 418.6 651.6 422.4 651.2 425C650.8 427.6 649.3 430.1 647.5 432.5C645.7 434.9 641.8 437.8 640 440C638.2 442.2 636.2 444.2 636.2 446.2C636.2 448.2 638.2 450.9 640 452.5C641.8 454.1 645.5 454.4 647.5 456.2C649.5 458.0 651.5 461.4 652.5 463.8C653.5 466.2 654.6 469.2 653.8 471.2C653.0 473.2 649.7 474.6 647.5 476.2C645.3 477.8 642.2 479.2 640 481.2C637.8 483.2 635.4 486.2 633.8 488.8C632.2 491.4 630.8 494.5 630 497.5C629.2 500.5 628.8 504.3 628.8 507.5C628.8 510.7 629.0 514.5 630 517.5C631.0 520.5 633.4 523.6 635 526.2C636.6 528.8 639.0 532.3 640 533.8C641.0 535.3 641.0 535.1 641.2 535.5C641.4 535.9 641.1 535.1 641.2 536.5C641.3 537.9 642.2 541.2 642 544C641.8 546.8 640.5 550.8 640 554C639.5 557.2 638.0 561.4 638.8 564C639.6 566.6 642.8 568.0 645 570.2C647.2 572.4 650.6 575.4 652.5 577.8C654.4 580.2 657.0 582.6 657 585.2C657.0 587.8 654.2 591.0 652.5 594C650.8 597.0 647.0 601.2 646.2 604C645.4 606.8 648.5 608.9 647.5 611.5C646.5 614.1 642.4 617.4 640 620.2C637.6 623.0 634.9 626.4 632.5 629C630.1 631.6 627.2 634.1 625 636.5C622.8 638.9 619.9 641.5 618.8 644C617.7 646.5 622.7 650.7 618 652C613.3 653.3 594.0 652.5 589.5 652C585.0 651.5 589.5 650.7 590 649C590.5 647.3 592.5 643.9 592.5 641.5C592.5 639.1 591.2 635.2 590 634C588.8 632.8 587.0 633.8 585 634C583.0 634.2 579.9 636.0 577.5 635.2C575.1 634.4 572.4 630.8 570 629C567.6 627.2 564.9 624.8 562.5 624C560.1 623.2 557.8 623.2 555 624C552.2 624.8 548.0 627.6 545 629C542.0 630.4 539.2 633.0 536.2 632.8C533.2 632.6 529.2 629.4 526.2 627.8C523.2 626.2 519.5 624.4 517.5 622.8C515.5 621.2 515.6 619.0 513.8 617.8C512.0 616.6 508.6 616.2 506.2 615.2C503.8 614.2 501.0 613.3 498.8 611.5C496.6 609.7 494.5 606.6 492.5 604C490.5 601.4 487.8 598.0 486.2 595.2C484.6 592.4 482.9 589.1 482.5 586.5C482.1 583.9 482.8 581.4 483.8 579C484.8 576.6 487.5 574.0 488.8 571.5C490.1 569.0 491.5 564.9 492 563.5C492.5 562.1 493.1 563.5 492 562.5C490.9 561.5 487.7 559.5 485 557.5C482.3 555.5 478.4 552.4 475 550C471.6 547.6 465.4 544.5 463.8 542.5C462.2 540.5 463.6 539.5 465 537.5C466.4 535.5 470.7 532.8 472.5 530C474.3 527.2 476.2 522.6 476.2 520C476.2 517.4 474.7 515.2 472.5 513.8C470.3 512.4 465.3 512.8 462.5 511.2C459.7 509.6 457.4 506.2 455 503.8C452.6 501.4 449.4 498.5 447.5 496.2C445.6 493.9 444.2 492.1 443 489.5C441.8 486.9 441.3 482.3 440 480C438.7 477.7 436.6 477.0 435 475C433.4 473.0 431.4 469.9 430 467.5C428.6 465.1 427.6 461.9 426.2 460C424.8 458.1 422.3 456.5 421.2 455.5C420.1 454.5 420.9 454.3 419.5 453.8C418.1 453.3 414.8 453.3 412.5 452.5C410.2 451.7 407.4 450.8 405 448.8C402.6 446.8 399.9 443.0 397.5 440C395.1 437.0 392.4 433.2 390 430C387.6 426.8 384.9 423.2 382.5 420C380.1 416.8 376.6 412.8 375 410C373.4 407.2 372.9 403.1 372.5 402.5C372.1 401.9 371.9 407.0 372.5 406.2C373.1 405.4 375.0 400.5 376.2 397.5C377.4 394.5 380.2 390.7 380 387.5C379.8 384.3 376.8 380.1 375 377.5C373.2 374.9 371.4 372.8 368.8 371.2C366.2 369.6 360.4 368.9 358.8 367.5C357.2 366.1 357.8 364.5 358.8 362.5C359.8 360.5 362.8 357.4 365 355C367.2 352.6 371.3 349.7 372.5 347.5C373.7 345.3 373.9 343.0 372.5 341.2C371.1 339.4 366.8 337.8 363.8 336.2C360.8 334.6 357.0 333.4 353.8 331.2C350.6 329.0 345.6 325.1 343.8 322.5C342.0 319.9 343.5 317.2 342.5 315C341.5 312.8 338.9 310.4 337.5 308.8C336.1 307.2 334.4 306.2 333.8 305C333.2 303.8 334.4 302.8 333.8 301.2C333.2 299.6 330.6 296.4 330 295C329.4 293.6 329.6 294.5 330 292.5C330.4 290.5 331.3 286.1 332.5 282.5C333.7 278.9 336.3 272.0 337.5 270C338.7 268.0 340.0 271.6 340 270C340.0 268.4 339.1 262.6 337.5 260C335.9 257.4 332.2 256.0 330 253.8C327.8 251.6 324.0 248.0 323.8 246.2C323.6 244.4 328.4 244.1 328.8 242.5C329.2 240.9 327.6 238.0 326.2 236.2C324.8 234.4 320.2 233.0 320 231.2C319.8 229.4 324.6 227.2 325 225C325.4 222.8 322.5 219.9 322.5 217.5C322.5 215.1 323.0 212.2 325 210C327.0 207.8 331.8 205.3 335 203.8Z" fill="#d5e1e7"/>
<path d="M398.8 186.2C400.2 186.8 404.9 188.0 407.5 190C410.1 192.0 412.6 195.6 415 198.8C417.4 202.0 420.3 206.6 422.5 210C424.7 213.4 427.4 217.7 428.8 220C430.2 222.3 430.8 223.8 431.2 224.5" fill="none" stroke="#fff" stroke-width="2" stroke-linecap="round" stroke-linejoin="round"/>
<path d="M601.2 160.5C599.8 160.6 595.9 160.8 592.5 161.2C589.1 161.6 583.4 162.2 580 163C576.6 163.8 573.2 164.9 571.2 166.2C569.2 167.5 567.7 169.2 567.5 171.2C567.3 173.2 569.7 176.2 570 178.8C570.3 181.4 569.9 184.9 569.5 187.5C569.1 190.1 568.4 192.6 567.5 195C566.6 197.4 564.9 200.2 563.8 202.5C562.7 204.8 561.0 208.4 560.5 209.5" fill="none" stroke="#fff" stroke-width="2" stroke-linecap="round" stroke-linejoin="round"/>
<path d="M560.5 209.5C559.2 208.8 555.0 206.2 552.5 205C550.0 203.8 547.6 203.1 545 202C542.4 200.9 538.6 198.4 536.2 198C533.8 197.6 532.4 198.4 530 199.5C527.6 200.6 524.0 203.3 521.2 205C518.4 206.7 515.1 208.2 512.5 210C509.9 211.8 507.0 214.5 505 216.2C503.0 217.9 500.8 219.8 500 220.5" fill="none" stroke="#fff" stroke-width="2" stroke-linecap="round" stroke-linejoin="round"/>
<path d="M560.5 209.5C560.6 210.6 560.9 214.6 561.2 216.2C561.5 217.8 562.3 218.7 562.5 219.2" fill="none" stroke="#fff" stroke-width="2" stroke-linecap="round" stroke-linejoin="round"/>
<path d="M562.5 219.2C563.3 219.3 565.9 220.2 567.5 220C569.1 219.8 571.1 217.4 572.5 218C573.9 218.6 574.6 222.3 576.2 223.8C577.8 225.3 580.7 226.5 582.5 227.5C584.3 228.5 585.7 228.6 587.5 230C589.3 231.4 591.8 234.6 593.8 236.2C595.8 237.8 598.0 238.4 600 240C602.0 241.6 604.2 243.8 606.2 246.2C608.2 248.6 610.5 252.4 612.5 255C614.5 257.6 617.2 260.8 618.8 262.5C620.4 264.2 621.9 265.0 622.5 265.5" fill="none" stroke="#fff" stroke-width="2" stroke-linecap="round" stroke-linejoin="round"/>
<path d="M562 220C560.9 221.2 557.3 224.7 555 227.5C552.7 230.3 549.1 234.5 547.5 237.5C545.9 240.5 546.2 243.6 545 246.2C543.8 248.8 542.4 251.2 540 253.8C537.6 256.4 533.2 259.9 530 262.5C526.8 265.1 522.8 268.4 520 270C517.2 271.6 515.7 271.5 512.5 272.5C509.3 273.5 504.0 274.8 500 276.2C496.0 277.6 490.7 279.7 487.5 281.2C484.3 282.7 481.2 284.8 480 285.5" fill="none" stroke="#fff" stroke-width="2" stroke-linecap="round" stroke-linejoin="round"/>
<path d="M476.2 281.2C476.8 281.6 479.0 282.8 480 283.8C481.0 284.8 481.9 285.9 482.5 287.5C483.1 289.1 482.6 292.6 483.8 293.8C485.0 295.0 487.8 294.4 490 295C492.2 295.6 495.1 295.9 497.5 297.5C499.9 299.1 502.6 302.6 505 305C507.4 307.4 509.7 310.9 512.5 312.5C515.3 314.1 519.3 314.4 522.5 315C525.7 315.6 529.7 315.6 532.5 316.2C535.3 316.8 538.2 317.2 540 318.8C541.8 320.4 542.2 324.4 543.8 326.2C545.4 328.0 547.8 328.8 550 330C552.2 331.2 556.1 331.8 557.5 333.8C558.9 335.8 558.8 340.7 558.8 342.5C558.8 344.3 557.7 344.6 557.5 345" fill="none" stroke="#fff" stroke-width="2" stroke-linecap="round" stroke-linejoin="round"/>
<path d="M516.2 380C514.8 379.4 510.5 377.4 507.5 376.2C504.5 375.0 500.7 373.7 497.5 372.5C494.3 371.3 491.1 369.6 487.5 368.8C483.9 368.0 479.0 367.5 475 367.5C471.0 367.5 465.7 369.0 462.5 368.8C459.3 368.6 456.8 366.3 455 366.2C453.2 366.1 451.8 367.7 451.2 368" fill="none" stroke="#fff" stroke-width="2" stroke-linecap="round" stroke-linejoin="round"/>
<path d="M433 318.8C432.9 320.2 432.7 324.3 432.5 327.5C432.3 330.7 432.1 337.0 432 338.8" fill="none" stroke="#fff" stroke-width="2" stroke-linecap="round" stroke-linejoin="round"/>
<path d="M430 410C430.0 411.6 430.0 416.8 430 420C430.0 423.2 430.0 426.2 430 430C430.0 433.8 430.0 446.2 430 443.8C430.0 441.4 430.0 417.4 430 415C430.0 412.6 430.0 426.6 430 428.8" fill="none" stroke="#fff" stroke-width="2" stroke-linecap="round" stroke-linejoin="round"/>
<path d="M367.5 370 L377.5 367.5" fill="none" stroke="#fff" stroke-width="2" stroke-linecap="round" stroke-linejoin="round"/>
<path d="M450 156.2C450.1 158.8 450.7 167.9 450.8 172.5C450.9 177.1 451.0 181.4 450.8 185C450.6 188.6 449.8 191.8 449.5 195C449.2 198.2 448.8 201.8 448.8 205C448.8 208.2 449.1 212.0 449.5 215C449.9 218.0 450.9 222.4 451.2 223.8" fill="none" stroke="#fff" stroke-width="2" stroke-linecap="round" stroke-linejoin="round"/>
<path d="M401.2 258C399.2 257.9 395.9 260.7 392.5 262C389.1 263.3 383.6 264.9 380 266.2C376.4 267.5 372.8 268.4 370 270C367.2 271.6 364.7 274.2 362.5 276.2C360.3 278.2 357.8 281.3 356.2 282.5C354.6 283.7 355.1 282.4 352.5 283.8C349.9 285.2 343.6 289.4 340 291.2C336.4 293.0 331.0 293.4 330 295C329.0 296.6 331.8 301.0 333.8 301.2C335.8 301.4 339.3 298.2 342.5 296.2C345.7 294.2 351.6 290.6 353.8 288.8C356.0 287.0 354.6 286.7 356.2 285C357.8 283.3 361.2 280.1 363.8 278C366.4 275.9 369.5 273.6 372.5 272C375.5 270.4 378.9 269.2 382.5 268C386.1 266.8 391.4 265.7 395 264.8C398.6 263.9 404.0 263.6 405 262.5C406.0 261.4 403.2 258.1 401.2 258Z" fill="#fff"/>
<path d="M451.2 156.2C452.5 153.0 456.6 154.4 460 152.5C463.4 150.6 469.3 145.1 472.5 144.5C475.7 143.9 477.8 147.3 480 148.8C482.2 150.3 485.0 151.6 486.2 153.8C487.4 156.0 487.1 159.5 487.5 162.5C487.9 165.5 488.0 169.3 488.8 172.5C489.6 175.7 491.3 179.7 492.5 182.5C493.7 185.3 496.2 187.8 496.2 190C496.2 192.2 492.7 193.8 492.5 196.2C492.3 198.6 494.0 202.0 495 205C496.0 208.0 498.0 212.6 498.8 215C499.6 217.4 500.4 217.6 500 220C499.6 222.4 498.6 228.5 496.2 230C493.8 231.5 488.4 230.0 485 229.5C481.6 229.0 478.6 227.6 475 227C471.4 226.4 466.0 226.0 462.5 225.5C459.0 225.0 454.8 225.5 453 223.8C451.2 222.1 451.7 218.0 451.2 215C450.7 212.0 450.0 208.2 450 205C450.0 201.8 450.8 198.2 451.2 195C451.6 191.8 452.4 188.6 452.5 185C452.6 181.4 452.2 177.1 452 172.5C451.8 167.9 449.9 159.4 451.2 156.2Z" fill="#4cb5c3" stroke="#fff" stroke-width="2" stroke-linejoin="round"/>
<path d="M335 203.8C338.2 202.3 341.4 201.2 345 200.5C348.6 199.8 355.6 198.4 357.5 199.5C359.4 200.6 356.6 204.6 357 207.5C357.4 210.4 359.6 214.3 360 217.5C360.4 220.7 359.8 223.9 359.5 227.5C359.2 231.1 357.8 236.6 358 240C358.2 243.4 357.8 247.1 360.5 248.8C363.2 250.5 370.7 250.2 375 250.5C379.3 250.8 384.1 250.1 387.5 250.5C390.9 250.9 394.0 251.8 396.2 253C398.4 254.2 401.8 256.6 401.2 258C400.6 259.4 395.9 260.7 392.5 262C389.1 263.3 383.6 264.9 380 266.2C376.4 267.5 372.8 268.4 370 270C367.2 271.6 364.7 274.2 362.5 276.2C360.3 278.2 357.8 281.3 356.2 282.5C354.6 283.7 355.1 282.4 352.5 283.8C349.9 285.2 343.6 289.4 340 291.2C336.4 293.0 331.6 294.8 330 295C328.4 295.2 329.6 294.5 330 292.5C330.4 290.5 331.3 286.1 332.5 282.5C333.7 278.9 336.3 272.0 337.5 270C338.7 268.0 340.0 271.6 340 270C340.0 268.4 339.1 262.6 337.5 260C335.9 257.4 332.2 256.0 330 253.8C327.8 251.6 324.0 248.0 323.8 246.2C323.6 244.4 328.4 244.1 328.8 242.5C329.2 240.9 327.6 238.0 326.2 236.2C324.8 234.4 320.2 233.0 320 231.2C319.8 229.4 324.6 227.2 325 225C325.4 222.8 322.5 219.9 322.5 217.5C322.5 215.1 323.0 212.2 325 210C327.0 207.8 331.8 205.3 335 203.8Z" fill="#4cb5c3" stroke="#fff" stroke-width="2" stroke-linejoin="round"/>
<path d="M431.2 225.5C433.6 225.0 437.0 224.9 440 225C443.0 225.1 446.4 225.8 450 226.2C453.6 226.6 458.5 227.0 462.5 227.5C466.5 228.0 471.4 228.9 475 229.5C478.6 230.1 482.2 230.7 485 231.2C487.8 231.7 491.7 231.1 492.5 232.5C493.3 233.9 491.0 237.6 490 240C489.0 242.4 487.4 244.7 486.2 247.5C485.0 250.3 483.7 254.5 482.5 257.5C481.3 260.5 480.4 264.6 478.8 266.2C477.2 267.8 475.1 267.7 472.5 267.5C469.9 267.3 466.1 265.7 462.5 265C458.9 264.3 453.6 263.2 450 263C446.4 262.8 443.2 264.0 440 263.8C436.8 263.6 433.2 262.4 430 262C426.8 261.6 423.2 261.5 420 261.2C416.8 260.9 412.1 260.8 410 260C407.9 259.2 407.3 257.8 407 256.2C406.7 254.6 407.1 252.2 408 250C408.9 247.8 410.8 245.1 412.5 242.5C414.2 239.9 416.8 236.1 418.8 233.8C420.8 231.5 423.0 229.3 425 228C427.0 226.7 428.8 226.0 431.2 225.5Z" fill="#038c9e" stroke="#fff" stroke-width="2" stroke-linejoin="round"/>
<path d="M356.2 285C357.8 283.3 361.2 280.1 363.8 278C366.4 275.9 369.5 273.6 372.5 272C375.5 270.4 378.9 269.2 382.5 268C386.1 266.8 391.4 265.7 395 264.8C398.6 263.9 402.6 262.7 405 262.5C407.4 262.3 407.6 263.4 410 263.8C412.4 264.2 416.8 264.5 420 264.8C423.2 265.1 426.8 265.4 430 265.8C433.2 266.2 436.8 267.0 440 267.2C443.2 267.4 446.4 266.5 450 266.8C453.6 267.1 458.7 268.2 462.5 268.8C466.3 269.4 471.8 270.3 473.8 270.5C475.8 270.7 474.8 268.5 475 270C475.2 271.5 475.8 277.2 475 280C474.2 282.8 472.0 284.9 470 287.5C468.0 290.1 464.9 293.4 462.5 296.2C460.1 299.0 457.4 302.4 455 305C452.6 307.6 449.9 310.6 447.5 312.5C445.1 314.4 442.8 316.6 440 317C437.2 317.4 433.2 315.1 430 315C426.8 314.9 423.2 316.3 420 316.2C416.8 316.1 413.2 314.9 410 314.5C406.8 314.1 403.2 313.5 400 313.8C396.8 314.1 393.2 316.0 390 316.2C386.8 316.4 383.2 315.5 380 315C376.8 314.5 372.4 314.2 370 313C367.6 311.8 366.8 308.6 365 307.5C363.2 306.4 361.0 305.8 358.8 306.2C356.6 306.6 353.6 309.1 351.2 310C348.8 310.9 346.0 312.2 343.8 312C341.6 311.8 339.1 309.9 337.5 308.8C335.9 307.7 334.4 306.2 333.8 305C333.2 303.8 332.4 302.6 333.8 301.2C335.2 299.8 339.3 298.2 342.5 296.2C345.7 294.2 351.6 290.6 353.8 288.8C356.0 287.0 354.6 286.7 356.2 285Z" fill="#4cb5c3" stroke="#fff" stroke-width="2" stroke-linejoin="round"/>
<path d="M377.5 368.8C378.3 367.4 382.6 365.6 385 363.8C387.4 362.0 390.1 359.1 392.5 357.5C394.9 355.9 396.8 354.8 400 353.8C403.2 352.8 409.3 352.0 412.5 351.2C415.7 350.4 417.6 350.0 420 348.8C422.4 347.6 425.3 345.2 427.5 343.8C429.7 342.4 431.8 340.4 433.8 340C435.8 339.6 438.2 340.4 440 341.2C441.8 342.0 442.4 344.2 445 345C447.6 345.8 454.4 345.4 456.2 346.2C458.0 347.0 456.6 348.2 456.2 350C455.8 351.8 454.8 354.9 453.8 357.5C452.8 360.1 451.4 364.2 450 366.2C448.6 368.2 446.8 368.6 445 370C443.2 371.4 440.6 373.4 438.8 375C437.0 376.6 435.0 378.0 433.8 380C432.6 382.0 431.8 385.1 431.2 387.5C430.6 389.9 430.0 392.2 430 395C430.0 397.8 431.2 402.6 431.2 405C431.2 407.4 430.7 410.0 430 410C429.3 410.0 427.6 407.4 427 405C426.4 402.6 426.7 397.6 426.2 395C425.7 392.4 425.2 390.6 423.8 388.8C422.4 387.0 419.7 385.0 417.5 383.8C415.3 382.6 412.8 381.8 410 381.2C407.2 380.6 402.8 380.6 400 380C397.2 379.4 394.9 378.3 392.5 377.5C390.1 376.7 387.0 375.8 385 375C383.0 374.2 381.2 373.5 380 372.5C378.8 371.5 376.7 370.2 377.5 368.8Z" fill="#4cb5c3" stroke="#fff" stroke-width="2" stroke-linejoin="round"/>
<path d="M517.5 370C518.1 367.4 519.2 365.8 521.2 363.8C523.2 361.8 526.6 359.4 530 357.5C533.4 355.6 538.5 353.5 542.5 352C546.5 350.5 551.0 348.9 555 348C559.0 347.1 563.3 346.6 567.5 346.2C571.7 345.8 578.8 344.4 581.2 345.8C583.6 347.2 582.1 351.9 582.5 355C582.9 358.1 582.6 363.2 583.8 365C585.0 366.8 587.6 366.3 590 366.2C592.4 366.1 596.2 364.1 598.8 364.5C601.4 364.9 604.8 366.9 606.2 368.8C607.6 370.7 607.8 373.6 607.5 376.2C607.2 378.8 605.1 382.2 604.5 385C603.9 387.8 604.9 391.6 603.8 393.8C602.7 396.0 599.9 397.6 597.5 398.8C595.1 400.0 590.8 400.0 588.8 401.2C586.8 402.4 586.8 404.2 585 406.2C583.2 408.2 579.3 411.4 577.5 413.8C575.7 416.2 574.8 418.6 573.8 421.2C572.8 423.8 572.2 427.0 571.2 430C570.2 433.0 568.9 436.8 567.5 440C566.1 443.2 563.9 446.8 562.5 450C561.1 453.2 559.8 457.1 558.8 460C557.8 462.9 558.0 466.5 556.2 468C554.4 469.5 548.9 468.8 547.5 469.5C546.1 470.2 546.1 471.4 547.5 472.5C548.9 473.6 554.4 474.0 556.2 476.2C558.0 478.4 557.8 483.2 558.8 486.2C559.8 489.2 561.1 492.8 562.5 495C563.9 497.2 565.3 498.8 567.5 500C569.7 501.2 573.8 501.6 576.2 502.5C578.6 503.4 582.3 503.9 582.5 505.5C582.7 507.1 579.1 510.2 577.5 512.5C575.9 514.8 574.9 518.4 572.5 520C570.1 521.6 566.1 522.5 562.5 522.5C558.9 522.5 553.6 521.0 550 520C546.4 519.0 543.2 516.4 540 516.2C536.8 516.0 533.6 518.0 530 518.8C526.4 519.6 520.9 520.4 517.5 521.2C514.1 522.0 510.2 522.4 508.8 523.8C507.4 525.2 508.4 527.8 508.8 530C509.2 532.2 510.2 535.1 511.2 537.5C512.2 539.9 515.2 543.2 515 545C514.8 546.8 512.4 547.0 510 548.8C507.6 550.6 502.9 554.0 500 556.2C497.1 558.4 494.4 562.3 492 562.5C489.6 562.7 487.7 559.5 485 557.5C482.3 555.5 478.4 552.4 475 550C471.6 547.6 465.4 544.5 463.8 542.5C462.2 540.5 463.6 539.5 465 537.5C466.4 535.5 470.7 532.8 472.5 530C474.3 527.2 476.2 522.6 476.2 520C476.2 517.4 474.7 515.2 472.5 513.8C470.3 512.4 465.3 512.8 462.5 511.2C459.7 509.6 457.4 506.2 455 503.8C452.6 501.4 449.5 498.6 447.5 496.2C445.5 493.8 441.8 490.3 442.8 488.5C443.8 486.7 450.4 486.0 453.8 484.8C457.2 483.6 460.6 482.4 463.8 481C467.0 479.6 470.8 477.6 473.8 476C476.8 474.4 480.3 473.0 482.5 470.8C484.7 468.6 486.5 465.4 487.5 462.5C488.5 459.6 488.5 455.7 488.8 452.5C489.1 449.3 488.8 445.6 489.2 442.5C489.6 439.4 490.3 435.9 491.2 433.2C492.1 430.5 493.4 428.0 495 425.8C496.6 423.6 499.0 421.4 501.2 419.5C503.4 417.6 506.4 416.1 508.8 414.2C511.2 412.3 514.6 409.7 516.2 407.5C517.8 405.3 518.4 401.9 518.8 400.5C519.2 399.1 518.9 400.5 518.8 398.8C518.7 397.1 518.2 393.0 518 390C517.8 387.0 517.6 383.2 517.5 380C517.4 376.8 516.9 372.6 517.5 370Z" fill="#038c9e" stroke="#fff" stroke-width="2" stroke-linejoin="round"/>
<path d="M419.5 453.8C419.9 452.1 422.3 448.0 423.8 445C425.3 442.0 426.8 438.0 428.8 435C430.8 432.0 433.6 428.6 436.2 426.2C438.8 423.8 442.0 422.0 445 420C448.0 418.0 451.8 415.6 455 413.8C458.2 412.0 461.8 410.3 465 408.8C468.2 407.3 471.8 405.6 475 404.5C478.2 403.4 481.4 402.2 485 402C488.6 401.8 493.5 403.0 497.5 403C501.5 403.0 506.6 402.4 510 402C513.4 401.6 517.8 399.6 518.8 400.5C519.8 401.4 517.8 405.3 516.2 407.5C514.6 409.7 511.2 412.3 508.8 414.2C506.4 416.1 503.4 417.6 501.2 419.5C499.0 421.4 496.6 423.6 495 425.8C493.4 428.0 492.1 430.5 491.2 433.2C490.3 435.9 489.6 439.4 489.2 442.5C488.8 445.6 489.1 449.3 488.8 452.5C488.5 455.7 488.5 459.6 487.5 462.5C486.5 465.4 484.7 468.6 482.5 470.8C480.3 473.0 476.8 474.4 473.8 476C470.8 477.6 467.0 479.6 463.8 481C460.6 482.4 457.2 483.6 453.8 484.8C450.4 486.0 445.0 489.3 442.8 488.5C440.6 487.7 441.2 482.2 440 480C438.8 477.8 436.6 477.0 435 475C433.4 473.0 431.4 469.9 430 467.5C428.6 465.1 427.6 461.9 426.2 460C424.8 458.1 422.3 456.5 421.2 455.5C420.1 454.5 419.1 455.5 419.5 453.8Z" fill="#4cb5c3" stroke="#fff" stroke-width="2" stroke-linejoin="round"/>
<path d="M591.2 402C593.4 401.0 597.2 399.1 598.8 400C600.4 400.9 599.8 405.7 601.2 407.5C602.6 409.3 605.3 411.0 607.5 411.2C609.7 411.4 613.0 410.2 615 408.8C617.0 407.4 618.6 403.7 620 402.5C621.4 401.3 622.6 400.6 623.8 401.2C625.0 401.8 625.9 404.8 627.5 406.2C629.1 407.6 631.2 409.4 633.8 410C636.4 410.6 641.2 409.0 643.8 410C646.4 411.0 648.8 413.8 650 416.2C651.2 418.6 651.6 422.4 651.2 425C650.8 427.6 649.3 430.1 647.5 432.5C645.7 434.9 641.8 437.8 640 440C638.2 442.2 636.2 444.2 636.2 446.2C636.2 448.2 638.2 450.9 640 452.5C641.8 454.1 645.5 454.4 647.5 456.2C649.5 458.0 651.5 461.4 652.5 463.8C653.5 466.2 654.6 469.2 653.8 471.2C653.0 473.2 649.7 474.6 647.5 476.2C645.3 477.8 642.2 479.2 640 481.2C637.8 483.2 635.4 486.2 633.8 488.8C632.2 491.4 630.8 494.5 630 497.5C629.2 500.5 628.8 504.3 628.8 507.5C628.8 510.7 629.0 514.5 630 517.5C631.0 520.5 633.4 523.6 635 526.2C636.6 528.8 640.4 533.0 640 533.8C639.6 534.6 635.3 532.0 632.5 531.2C629.7 530.4 625.7 529.0 622.5 528.8C619.3 528.6 615.3 529.8 612.5 530C609.7 530.2 606.6 530.8 605 530C603.4 529.2 604.5 526.0 602.5 525C600.5 524.0 594.7 524.4 592.5 523.8C590.3 523.2 589.6 523.0 588.8 521.2C588.0 519.4 588.3 515.1 587.5 512.5C586.7 509.9 585.6 506.6 583.8 505C582.0 503.4 578.8 503.3 576.2 502.5C573.6 501.7 569.7 501.2 567.5 500C565.3 498.8 563.9 497.2 562.5 495C561.1 492.8 559.8 489.2 558.8 486.2C557.8 483.2 558.0 478.4 556.2 476.2C554.4 474.0 548.9 473.6 547.5 472.5C546.1 471.4 546.1 470.2 547.5 469.5C548.9 468.8 554.4 469.5 556.2 468C558.0 466.5 557.8 462.9 558.8 460C559.8 457.1 561.1 453.2 562.5 450C563.9 446.8 566.1 443.2 567.5 440C568.9 436.8 570.2 433.0 571.2 430C572.2 427.0 572.8 423.8 573.8 421.2C574.8 418.6 575.7 416.2 577.5 413.8C579.3 411.4 582.8 408.1 585 406.2C587.2 404.3 589.0 403.0 591.2 402Z" fill="#4cb5c3" stroke="#fff" stroke-width="2" stroke-linejoin="round"/>
<g transform="translate(473 188)"><circle cx="-3.6" cy="-2.6" r="10.6" fill="#0b4a5c" opacity="0.45"/><path d="M0 16.4C-2.6 12.6-10.7 7-10.7 0A10.7 10.700 0 1 1 10.700 0C10.700 7 2.600 12.600 0 16.400Z" fill="#ee6563" stroke="#fbeaea" stroke-width="1.1"/><text x="0" y="3.6" text-anchor="middle" class="pn" fill="#fdf3f0">1</text></g>
<g transform="translate(346.8 237.3)"><circle cx="-3.6" cy="-2.6" r="10.6" fill="#0b4a5c" opacity="0.45"/><path d="M0 16.4C-2.6 12.6-10.7 7-10.7 0A10.7 10.700 0 1 1 10.700 0C10.700 7 2.600 12.600 0 16.400Z" fill="#ee6563" stroke="#fbeaea" stroke-width="1.1"/><text x="0" y="3.6" text-anchor="middle" class="pn" fill="#fdf3f0">1</text></g>
<g transform="translate(451.3 241)"><circle cx="-3.6" cy="-2.6" r="10.6" fill="#0b4a5c" opacity="0.45"/><path d="M0 16.4C-2.6 12.6-10.7 7-10.7 0A10.7 10.700 0 1 1 10.700 0C10.700 7 2.600 12.600 0 16.400Z" fill="#ee6563" stroke="#fbeaea" stroke-width="1.1"/><text x="0" y="3.6" text-anchor="middle" class="pn" fill="#fdf3f0">5</text></g>
<g transform="translate(409.5 285.5)"><circle cx="-3.6" cy="-2.6" r="10.6" fill="#0b4a5c" opacity="0.45"/><path d="M0 16.4C-2.6 12.6-10.7 7-10.7 0A10.7 10.700 0 1 1 10.700 0C10.700 7 2.600 12.600 0 16.400Z" fill="#ee6563" stroke="#fbeaea" stroke-width="1.1"/><text x="0" y="3.6" text-anchor="middle" class="pn" fill="#fdf3f0">2</text></g>
<g transform="translate(425.8 359.8)"><circle cx="-3.6" cy="-2.6" r="10.6" fill="#0b4a5c" opacity="0.45"/><path d="M0 16.4C-2.6 12.6-10.7 7-10.7 0A10.7 10.700 0 1 1 10.700 0C10.700 7 2.600 12.600 0 16.400Z" fill="#ee6563" stroke="#fbeaea" stroke-width="1.1"/><text x="0" y="3.6" text-anchor="middle" class="pn" fill="#fdf3f0">1</text></g>
<g transform="translate(463.8 432.3)"><circle cx="-3.6" cy="-2.6" r="10.6" fill="#0b4a5c" opacity="0.45"/><path d="M0 16.4C-2.6 12.6-10.7 7-10.7 0A10.7 10.700 0 1 1 10.700 0C10.700 7 2.600 12.600 0 16.400Z" fill="#ee6563" stroke="#fbeaea" stroke-width="1.1"/><text x="0" y="3.6" text-anchor="middle" class="pn" fill="#fdf3f0">1</text></g>
<g transform="translate(532 433.5)"><circle cx="-3.6" cy="-2.6" r="10.6" fill="#0b4a5c" opacity="0.45"/><path d="M0 16.4C-2.6 12.6-10.7 7-10.7 0A10.7 10.700 0 1 1 10.700 0C10.700 7 2.600 12.600 0 16.400Z" fill="#ee6563" stroke="#fbeaea" stroke-width="1.1"/><text x="0" y="3.6" text-anchor="middle" class="pn" fill="#fdf3f0">5</text></g>
<g transform="translate(604.3 456)"><circle cx="-3.6" cy="-2.6" r="10.6" fill="#0b4a5c" opacity="0.45"/><path d="M0 16.4C-2.6 12.6-10.7 7-10.7 0A10.7 10.700 0 1 1 10.700 0C10.700 7 2.600 12.600 0 16.400Z" fill="#ee6563" stroke="#fbeaea" stroke-width="1.1"/><text x="0" y="3.6" text-anchor="middle" class="pn" fill="#fdf3f0">3</text></g>
<g stroke="#4d70bc" stroke-width=".9" fill="none">
<path d="M60 83.5H941.5" opacity="0.9"/>
<path d="M60 100.4H941.5" opacity="0.9"/>
<path d="M60 114.8H941.5" opacity="0.55"/>
<path d="M60 120.4H941.5" opacity="0.7"/>
<path d="M60 130.3H941.5" opacity="0.85"/>
<path d="M60 139.2H941.5" opacity="0.9"/>
<path d="M60 204.4H941.5" opacity="0.9"/>
<path d="M60 428.4H941.5" opacity="0.9"/>
<path d="M60 652.2H941.5" opacity="0.9"/>
<path d="M91.5 72V681.5" opacity="1"/>
<path d="M289 72V681.5" opacity="0.7"/>
<path d="M687 72V681.5" opacity="0.7"/>
<path d="M875 72V681.5" opacity="0.38"/>
</g>
</svg>
<div class="a" style="left:48.5px;top:681.5px;width:905px;height:10.5px;background:#4b4b4b"></div>
<div class="a" style="left:81px;top:681.5px;width:124px;height:10.5px;background:#555"></div>
<div class="t b" style="transform:scaleX(0.984);transform-origin:0 0;left:56px;top:682px;font-size:6.6px;color:#e0e0e0">93,3%</div>
<div class="t b" style="transform:scaleX(0.991);transform-origin:0 0;left:108.5px;top:682px;font-size:6.6px;color:#cfcfcf">Док: 5,93M/281,9M</div>
<svg style="left:196.5px;top:683.5px" width="4" height="7" viewBox="0 0 4 7"><path d="M.5.5L3.3 3.5L.5 6.5" fill="none" stroke="#d8d8d8" stroke-width=".9"/></svg>
<svg style="left:209px;top:684px" width="4" height="6" viewBox="0 0 4 6"><path d="M3.3.5L.7 3L3.3 5.5" fill="none" stroke="#7c7c7c" stroke-width=".9"/></svg>
<svg style="left:934px;top:684px" width="4" height="6" viewBox="0 0 4 6"><path d="M.7.5L3.3 3L.7 5.5" fill="none" stroke="#7c7c7c" stroke-width=".9"/></svg>
<div class="a" style="left:463.5px;top:682.5px;width:222.5px;height:8.5px;background:#6b6b6b"></div>
<div class="a" style="left:0;top:692px;width:1280px;height:6px;background:linear-gradient(to right,#293d45 0%,#1d3545 45%,#16263e 80%,#15223a 100%)"></div>
<div class="t" style="left:1216px;top:695.3px;font-size:7.5px;color:#e8e8e8;height:3px;overflow:hidden;line-height:7px">0:50</div>
<div class="a" style="left:487.5px;top:692.5px;width:106px;height:5.5px;background:#4c6676"></div>
<!-- ===== right side ===== -->
<!-- collapsed strip -->
<div class="a" style="left:954.5px;top:50px;width:25.5px;height:642px;background:#535353"></div>
<div class="a" style="left:954.5px;top:77px;width:25.5px;height:1px;background:#474747"></div>
<div class="a" style="left:979.8px;top:42px;width:1.8px;height:650px;background:#454545"></div>
<svg style="left:969.5px;top:44.5px" width="6" height="4" viewBox="0 0 6 4" fill="#c8c8c8"><path d="M2.6 0V4L0 2ZM5.8 0V4L3.2 2Z"/></svg>
<div class="a" style="left:961px;top:54px;width:12px;height:1px;background:#484848"></div>
<!-- history icon -->
<svg style="left:961px;top:59px" width="13" height="13" viewBox="0 0 13 13"><g fill="none" stroke="#e0e0e0" stroke-width=".8"><rect x=".9" y="1" width="2.6" height="2.6"/><rect x=".9" y="4.6" width="2.6" height="2.6"/></g><rect x=".5" y="8" width="3.4" height="3.6" fill="#e6e6e6"/><path d="M6.2 3.2C9.6 1.6 11.4 4.4 10.4 7.4C10 8.8 9 9.8 8 10.4" fill="none" stroke="#e6e6e6" stroke-width="1.2"/><path d="M5.2 3.6L7.6 1.2L8 4.4Z" fill="#e6e6e6"/></svg>

<!-- ===== color panel ===== -->
<div class="a" style="left:981.5px;top:50px;width:222px;height:18.5px;background:#424242"></div>
<div class="a" style="left:981.5px;top:50px;width:28.5px;height:19px;background:#535353"></div>
<div class="a" style="left:1010.5px;top:50px;width:42px;height:18px;background:#474747"></div>
<div class="a" style="left:981.5px;top:68.5px;width:222px;height:193.5px;background:#535353"></div>
<div class="t b" style="transform:scaleX(0.863);transform-origin:0 0;left:986.5px;top:54.5px;font-size:7.6px;color:#ececec">Цвет</div>
<div class="t b" style="transform:scaleX(0.870);transform-origin:0 0;left:1016px;top:54.5px;font-size:7.6px;color:#9a9a9a">Образцы</div>
<svg style="left:1192px;top:57px" width="6" height="5" viewBox="0 0 6 5"><path d="M0 .6H6M0 2.2H6M0 3.8H6" stroke="#b0b0b0" stroke-width=".9"/></svg>
<!-- fg/bg -->
<div class="a" style="left:994px;top:82px;width:13px;height:13px;background:#2e5c66;border:1px solid #d8dcd8"></div>
<div class="a" style="left:986.5px;top:75.5px;width:13px;height:12.5px;background:#9a4a4e;border:1px solid #e4d8d2"></div>
<!-- color field -->
<div class="a" style="left:1010.5px;top:73px;width:157.5px;height:176px;background:linear-gradient(to bottom,rgba(0,0,0,0) 0%,rgba(0,0,0,.14) 25%,rgba(0,0,0,.37) 50%,rgba(0,0,0,.69) 75%,#000 100%),linear-gradient(to right,#fff 0%,#ffb6b6 25%,#ff7070 50%,#ff3030 75%,#ff0000 100%)"></div>
<div class="a" style="left:1054.5px;top:163.7px;width:7px;height:7px;border:1px solid #e8e8e8;border-radius:50%"></div>
<!-- hue strip -->
<div class="a" style="left:1179px;top:73px;width:13.2px;height:176px;background:linear-gradient(to bottom,#ff0000 0%,#ff00ff 16.6%,#0000ff 33.3%,#00ffff 50%,#00ff00 66.6%,#ffff00 83.3%,#ff0000 100%)"></div>
<svg style="left:1173.5px;top:245.5px" width="5" height="6" viewBox="0 0 5 6"><path d="M.3.3L4.6 3L.3 5.7Z" fill="#f0f0f0"/></svg>
<div class="a" style="left:981.5px;top:262px;width:222px;height:2.5px;background:#404040"></div>

<!-- right-most column -->
<div class="a" style="left:1203px;top:42px;width:2px;height:650px;background:#464646"></div>
<div class="a" style="left:1205px;top:50px;width:75px;height:642px;background:#535353"></div>
<svg style="left:1194px;top:44.5px" width="6" height="4" viewBox="0 0 6 4" fill="#c8c8c8"><path d="M0 0L2.6 2L0 4ZM3.2 0L5.8 2L3.2 4Z"/></svg>
<svg style="left:1271px;top:44.5px" width="6" height="4" viewBox="0 0 6 4" fill="#c8c8c8"><path d="M2.6 0V4L0 2ZM5.8 0V4L3.2 2Z"/></svg>
<div class="a" style="left:1234px;top:52.5px;width:16px;height:1px;background:#484848"></div>
<div class="a" style="left:1205px;top:77px;width:75px;height:1px;background:#474747"></div>
<div class="a" style="left:1205px;top:104.5px;width:75px;height:1px;background:#474747"></div>
<!-- bulb -->
<svg style="left:1212px;top:58px" width="10" height="15" viewBox="0 0 10 15"><path d="M3.4 9.6C3.4 7.8 1 7 1 4.6A4 4 0 0 1 9 4.6C9 7 6.600 7.8 6.600 9.600Z" fill="none" stroke="#e4e4e4" stroke-width="1"/><path d="M3.6 11.2H6.400M3.600 12.800H6.400" stroke="#e4e4e4" stroke-width="1"/></svg>
<div class="t b" style="transform:scaleX(0.881);transform-origin:0 0;left:1230px;top:61.5px;font-size:7.4px;color:#e6e6e6">Обучение</div>
<!-- cc icon -->
<svg style="left:1210.5px;top:88px" width="14" height="10" viewBox="0 0 14 10"><path d="M4.4 9.2A3.400 3.400 0 0 1 3.400 2.600A4.200 4.200 0 0 1 11 2.800A3.200 3.200 0 0 1 10.400 9.200Z" fill="#c4c4c4" stroke="#e0e0e0" stroke-width=".8"/><circle cx="5.6" cy="5.6" r="2" fill="none" stroke="#535353" stroke-width=".9"/><circle cx="8.6" cy="5.6" r="2" fill="none" stroke="#535353" stroke-width=".9"/></svg>
<div class="t b" style="transform:scaleX(0.879);transform-origin:0 0;left:1230px;top:88px;font-size:7.4px;color:#e6e6e6">Библиотеки</div>
<!-- ===== properties panel ===== -->
<div class="a" style="left:981.5px;top:264.5px;width:222px;height:19px;background:#424242"></div>
<div class="a" style="left:981.5px;top:264.5px;width:42.5px;height:19.5px;background:#535353"></div>
<div class="a" style="left:1024.5px;top:264.5px;width:48.5px;height:18.5px;background:#474747"></div>
<div class="a" style="left:981.5px;top:283.5px;width:222px;height:194.5px;background:#535353"></div>
<div class="t b" style="transform:scaleX(0.845);transform-origin:0 0;left:986.5px;top:269px;font-size:7.6px;color:#ececec">Свойства</div>
<div class="t b" style="transform:scaleX(0.892);transform-origin:0 0;left:1030px;top:269px;font-size:7.6px;color:#9a9a9a">Коррекция</div>
<svg style="left:1192px;top:271.5px" width="6" height="5" viewBox="0 0 6 5"><path d="M0 .6H6M0 2.2H6M0 3.8H6" stroke="#b0b0b0" stroke-width=".9"/></svg>
<!-- header icons -->
<div class="a" style="left:988px;top:288.5px;width:14.5px;height:13.5px;background:#3a3a3a;border-radius:1px"></div>
<svg style="left:990.5px;top:290.5px" width="10" height="10" viewBox="0 0 10 10"><rect x="1.8" y="1.8" width="6.4" height="6.4" fill="none" stroke="#e4e4e4" stroke-width="1"/><g fill="#e4e4e4"><rect x=".6" y=".6" width="2.2" height="2.2"/><rect x="7.2" y=".6" width="2.2" height="2.2"/><rect x=".6" y="7.2" width="2.2" height="2.2"/><rect x="7.2" y="7.2" width="2.2" height="2.2"/></g></svg>
<div class="a" style="left:1006px;top:291px;width:11.5px;height:9px;background:#e2e2e2;border-radius:1px"></div>
<div class="a" style="left:1009px;top:292.7px;width:5.6px;height:5.6px;background:#3c3c3c;border-radius:50%"></div>
<div class="t" style="transform:scaleX(0.884);transform-origin:0 0;left:1022.5px;top:291.5px;font-size:7.5px;color:#d2d2d2">Свойства интерактивной формы</div>
<div class="a" style="left:981.5px;top:305.5px;width:222px;height:1px;background:#484848"></div>
<!-- scrollbar -->
<div class="a" style="left:1193px;top:309px;width:9px;height:153px;background:#4d4d4d"></div>
<div class="a" style="left:1194px;top:318.5px;width:7px;height:119.5px;background:#6a6a6a"></div>
<svg style="left:1194.5px;top:312px" width="6" height="4" viewBox="0 0 6 4"><path d="M.5 3.3L3 .8L5.500 3.300" fill="none" stroke="#808080" stroke-width=".9"/></svg>
<svg style="left:1194.5px;top:452.5px" width="6" height="4" viewBox="0 0 6 4"><path d="M.5.7L3 3.200L5.500.7" fill="none" stroke="#808080" stroke-width=".9"/></svg>
<!-- row 1 -->
<div class="t" style="transform:scaleX(0.860);transform-origin:0 0;left:986.5px;top:315.5px;font-size:7.3px;color:#c4c4c4">Ш:</div>
<div class="inp" style="left:1000.5px;top:315.3px;width:50px;height:10px"></div>
<div class="t b" style="transform:scaleX(0.891);transform-origin:0 0;left:1003.7px;top:315.5px;font-size:7.2px;color:#e0e0e0">1350 пикс.</div>
<svg style="left:1058px;top:317.5px" width="10" height="6" viewBox="0 0 10 6"><circle cx="3" cy="3" r="2.300" fill="none" stroke="#c8c8c8" stroke-width=".9"/><circle cx="7" cy="3" r="2.300" fill="none" stroke="#c8c8c8" stroke-width=".9"/></svg>
<div class="t" style="transform:scaleX(0.869);transform-origin:0 0;left:1076px;top:315.5px;font-size:7.3px;color:#c4c4c4">В:</div>
<div class="inp" style="left:1087px;top:315.3px;width:50px;height:10px"></div>
<div class="t b" style="transform:scaleX(0.892);transform-origin:0 0;left:1089.8px;top:315.5px;font-size:7.2px;color:#e0e0e0">50 пикс.</div>
<!-- row 2 -->
<div class="t" style="transform:scaleX(0.796);transform-origin:0 0;left:988.5px;top:333.7px;font-size:7.3px;color:#c4c4c4">X:</div>
<div class="inp" style="left:1000.5px;top:333.5px;width:50px;height:10px"></div>
<div class="t b" style="transform:scaleX(0.874);transform-origin:0 0;left:1003.7px;top:333.7px;font-size:7.2px;color:#e0e0e0">285 пикс.</div>
<div class="t" style="transform:scaleX(0.923);transform-origin:0 0;left:1075.5px;top:333.700px;font-size:7.3px;color:#c4c4c4">Y:</div>
<div class="inp" style="left:1087px;top:333.5px;width:50px;height:10px"></div>
<div class="t b" style="transform:scaleX(0.881);transform-origin:0 0;left:1089.8px;top:333.7px;font-size:7.2px;color:#e0e0e0">165 пикс.</div>
<!-- row 3 -->
<div class="a" style="left:987px;top:352.5px;width:16.5px;height:10.5px;background:#ebebeb;border-radius:1px"></div>
<div class="a" style="left:1009.5px;top:352.5px;width:16.5px;height:10.5px;background:#f4f4f4;border-radius:1px"></div>
<svg style="left:1009.5px;top:352.5px" width="17" height="11" viewBox="0 0 17 11"><rect x="4.400" y="3.800" width="8.600" height="3" fill="#444"/><path d="M3.600 9.600L13.800 1.200" stroke="#e02020" stroke-width="1.1"/></svg>
<div class="inp" style="left:1032px;top:352.5px;width:50px;height:10.5px"></div>
<div class="a" style="left:1072.5px;top:353px;width:1px;height:9.5px;background:#5a5a5a"></div>
<div class="t b" style="transform:scaleX(0.882);transform-origin:0 0;left:1034.500px;top:353px;font-size:7.2px;color:#e0e0e0">1 пикс.</div>
<svg style="left:1075px;top:356.500px" width="5" height="3" viewBox="0 0 5 3"><path d="M.3.3L2.500 2.500L4.700.3" fill="none" stroke="#c0c0c0" stroke-width=".8"/></svg>
<div class="inp" style="left:1087px;top:352.500px;width:49.500px;height:10.500px"></div>
<div class="a" style="left:1089.500px;top:357.200px;width:37.500px;height:1.300px;background:#f0f0f0"></div>
<svg style="left:1130px;top:356.500px" width="5" height="3" viewBox="0 0 5 3"><path d="M.3.3L2.500 2.500L4.700.3" fill="none" stroke="#c0c0c0" stroke-width=".8"/></svg>
<!-- row 4 -->
<div class="a" style="left:986.5px;top:367.8px;width:40.500px;height:9.200px;background:#484848;border-radius:1px"></div>
<div class="a" style="left:1032px;top:367.800px;width:41.500px;height:9.200px;background:#484848;border-radius:1px"></div>
<div class="a" style="left:1078.500px;top:367.800px;width:31.500px;height:9.200px;background:#484848;border-radius:1px"></div>
<svg style="left:986px;top:367px" width="126" height="11" viewBox="986 367 126 11"><rect x="992.2" y="369.200" width="6.600" height="6.600" fill="#e8e8e8"/><rect x="994.200" y="371.200" width="2.600" height="2.600" fill="#333"/><rect x="1038.200" y="369.200" width="5.800" height="6.600" fill="#e8e8e8"/><rect x="1038.200" y="371.300" width="2.400" height="2.400" fill="#444"/><path d="M1083.800 376V369.200H1091.600V372.600H1087.600V376Z" fill="#e8e8e8"/><rect x="1087" y="372" width="2.600" height="2.600" fill="#333"/>
<g fill="none" stroke="#c0c0c0" stroke-width=".8"><path d="M1020.300 371.300L1022.500 373.500L1024.700 371.300"/><path d="M1066.800 371.300L1069 373.500L1071.200 371.300"/><path d="M1103.800 371.300L1106 373.500L1108.200 371.300"/></g></svg>
<!-- row 5 -->
<div class="inp" style="left:998px;top:386.700px;width:138.500px;height:9.800px"></div>
<div class="t b" style="transform:scaleX(0.986);transform-origin:0 0;left:1000.500px;top:386.700px;font-size:7.200px;color:#d8d8d8;letter-spacing:-.2px">0пикс.0пикс.0пикс.0пикс.</div>
<!-- row 6 -->
<svg style="left:987px;top:402.300px" width="10" height="10" viewBox="0 0 10 10"><path d="M3.500.6H9.400V9.400H.6V3.500A2.900 2.900 0 0 1 3.500.6Z" fill="none" stroke="#c8c8c8" stroke-width=".9"/></svg>
<div class="inp" style="left:1001.500px;top:402.300px;width:57.500px;height:10px"></div>
<div class="t b" style="transform:scaleX(0.923);transform-origin:0 0;left:1004.500px;top:402.500px;font-size:7.200px;color:#e0e0e0">0 пикс.</div>
<div class="inp" style="left:1063.200px;top:402.300px;width:57.500px;height:10px"></div>
<div class="t b" style="transform:scaleX(0.923);transform-origin:0 0;left:1066.500px;top:402.500px;font-size:7.200px;color:#e0e0e0">0 пикс.</div>
<svg style="left:1126px;top:402.300px" width="10" height="10" viewBox="0 0 10 10"><path d="M.6.6H6.500A2.900 2.900 0 0 1 9.400 3.500V9.400H.6Z" fill="none" stroke="#c8c8c8" stroke-width=".9"/></svg>
<!-- link -->
<div class="a" style="left:1053.700px;top:417.200px;width:15.500px;height:15.800px;background:#3a3a3a;border-radius:1px"></div>
<svg style="left:1056.500px;top:422.200px" width="10" height="6" viewBox="0 0 10 6"><circle cx="3" cy="3" r="2.300" fill="none" stroke="#d0d0d0" stroke-width=".9"/><circle cx="7" cy="3" r="2.300" fill="none" stroke="#d0d0d0" stroke-width=".9"/></svg>
<!-- row 7 -->
<svg style="left:987px;top:438.800px" width="10" height="10" viewBox="0 0 10 10"><path d="M.6.6H9.400V9.400H3.500A2.900 2.900 0 0 1 .6 6.500Z" fill="none" stroke="#c8c8c8" stroke-width=".9"/></svg>
<div class="inp" style="left:1001.500px;top:438.800px;width:57.500px;height:10px"></div>
<div class="t b" style="transform:scaleX(0.923);transform-origin:0 0;left:1004.500px;top:439px;font-size:7.200px;color:#e0e0e0">0 пикс.</div>
<div class="inp" style="left:1063.200px;top:438.800px;width:57.500px;height:10px"></div>
<div class="t b" style="transform:scaleX(0.923);transform-origin:0 0;left:1066.500px;top:439px;font-size:7.200px;color:#e0e0e0">0 пикс.</div>
<svg style="left:1126px;top:438.800px" width="10" height="10" viewBox="0 0 10 10"><path d="M.6.6H9.400V6.500A2.900 2.900 0 0 1 6.500 9.400H.6Z" fill="none" stroke="#c8c8c8" stroke-width=".9"/></svg>
<!-- row 8 partial buttons -->
<div class="a" style="left:1017.700px;top:458px;width:20.700px;height:4.700px;background:#404040"></div>
<div class="a" style="left:1040.200px;top:458px;width:20.200px;height:4.700px;background:#454545"></div>
<div class="a" style="left:1062px;top:458px;width:20.400px;height:4.700px;background:#454545"></div>
<div class="a" style="left:1084.200px;top:458px;width:20.800px;height:4.700px;background:#454545"></div>
<div class="a" style="left:1024px;top:460.300px;width:7px;height:2.400px;background:#cfcfcf"></div>
<div class="a" style="left:1046.500px;top:461px;width:7px;height:1.700px;background:#b0b0b0;border-radius:3px 3px 0 0"></div>
<div class="a" style="left:1067.500px;top:460.300px;width:7.500px;height:2.400px;border:1px solid #c4c4c4;border-bottom:0"></div>
<div class="a" style="left:1090px;top:460.300px;width:7px;height:2.400px;background:#cfcfcf"></div>
<div class="a" style="left:981.5px;top:478px;width:222px;height:2.500px;background:#404040"></div>
<!-- ===== layers panel ===== -->
<div class="a" style="left:981.5px;top:480px;width:222px;height:19px;background:#424242"></div>
<div class="a" style="left:981.5px;top:480px;width:28.500px;height:19.500px;background:#535353"></div>
<div class="a" style="left:1010.500px;top:480px;width:36.500px;height:18.500px;background:#474747"></div>
<div class="a" style="left:1047.500px;top:480px;width:41.500px;height:18.500px;background:#474747"></div>
<div class="a" style="left:981.5px;top:499px;width:222px;height:193px;background:#535353"></div>
<div class="t b" style="transform:scaleX(0.830);transform-origin:0 0;left:986.500px;top:484.500px;font-size:7.600px;color:#ececec">Слои</div>
<div class="t b" style="transform:scaleX(0.832);transform-origin:0 0;left:1016px;top:484.500px;font-size:7.600px;color:#9a9a9a">Каналы</div>
<div class="t b" style="transform:scaleX(0.866);transform-origin:0 0;left:1054px;top:484.500px;font-size:7.600px;color:#9a9a9a">Контуры</div>
<svg style="left:1192px;top:487px" width="6" height="5" viewBox="0 0 6 5"><path d="M0 .6H6M0 2.200H6M0 3.800H6" stroke="#b0b0b0" stroke-width=".9"/></svg>
<!-- filter row -->
<div class="a" style="left:984px;top:505.300px;width:79px;height:11.500px;background:#3d3d3d;border-radius:1.500px"></div>
<svg style="left:988px;top:507px" width="8" height="8" viewBox="0 0 8 8"><circle cx="3.200" cy="3.200" r="2.300" fill="none" stroke="#e0e0e0" stroke-width="1.100"/><path d="M5 5L7.400 7.400" stroke="#e0e0e0" stroke-width="1.300"/></svg>
<div class="t b" style="transform:scaleX(0.806);transform-origin:0 0;left:997.600px;top:506px;font-size:7.300px;color:#dcdcdc">Вид</div>
<svg style="left:1056px;top:509.500px" width="5" height="3" viewBox="0 0 5 3"><path d="M.3.3L2.500 2.500L4.700.3" fill="none" stroke="#b4b4b4" stroke-width=".8"/></svg>
<svg style="left:1090px;top:504px" width="115" height="14" viewBox="1090 504 115 14">
 <rect x="1092.600" y="507.400" width="8.600" height="7.400" fill="none" stroke="#dcdcdc" stroke-width="1"/><path d="M1093.600 513.800L1096 510.600L1097.600 512.400L1098.600 511.400L1100.200 513.800Z" fill="#dcdcdc"/>
 <circle cx="1113" cy="511.200" r="3.800" fill="none" stroke="#dcdcdc" stroke-width="1"/><path d="M1113 507.400A3.800 3.800 0 0 1 1113 515Z" fill="#dcdcdc" transform="rotate(45 1113 511.200)"/>
 <path d="M1125.400 509.400V507.400H1132.600V509.400M1129 507.400V515M1127.200 515.200H1130.800" fill="none" stroke="#dcdcdc" stroke-width="1.300"/>
 <rect x="1141.600" y="508.200" width="6.400" height="6" fill="none" stroke="#dcdcdc" stroke-width="1"/><g fill="#dcdcdc"><rect x="1140.400" y="507" width="2.200" height="2.200"/><rect x="1147" y="507" width="2.200" height="2.200"/><rect x="1140.400" y="513.200" width="2.200" height="2.200"/><rect x="1147" y="513.200" width="2.200" height="2.200"/></g>
 <path d="M1158.600 507H1162.600L1164.800 509.200V515.400H1158.600Z" fill="#dcdcdc"/><rect x="1157.400" y="511.400" width="4" height="4" fill="#535353" stroke="#dcdcdc" stroke-width=".8"/>
 <rect x="1195.200" y="505.600" width="4.600" height="9.400" rx="2.300" fill="#3c3c3c"/><circle cx="1197.500" cy="507.800" r="2.300" fill="#e8e8e8"/>
</svg>
<div class="a" style="left:981.5px;top:520.500px;width:222px;height:1px;background:#494949"></div>
<!-- blend row -->
<div class="a" style="left:984px;top:524px;width:120px;height:11.500px;background:#4e4e4e;border-radius:1.500px"></div>
<div class="t" style="transform:scaleX(0.890);transform-origin:0 0;left:989px;top:525px;font-size:7.300px;color:#767676">Обычные</div>
<svg style="left:1097px;top:528.500px" width="5" height="3" viewBox="0 0 5 3"><path d="M.3.3L2.500 2.500L4.700.3" fill="none" stroke="#646464" stroke-width=".8"/></svg>
<div class="t" style="transform:scaleX(0.916);transform-origin:0 0;left:1110.700px;top:525px;font-size:7.300px;color:#777">Непрозрачность:</div>
<div class="a" style="left:1166px;top:524px;width:23px;height:11.500px;background:#4e4e4e;border:1px solid #494949"></div>
<div class="t" style="transform:scaleX(0.966);transform-origin:0 0;left:1169.500px;top:525px;font-size:7px;color:#6a6a6a">100%</div>
<div class="a" style="left:1190.500px;top:524px;width:9px;height:11.500px;background:#4e4e4e;border:1px solid #494949"></div>
<div class="a" style="left:981.5px;top:538.200px;width:222px;height:1px;background:#494949"></div>
<!-- lock row -->
<div class="t" style="transform:scaleX(0.922);transform-origin:0 0;left:984.500px;top:543.500px;font-size:7.300px;color:#777">Закрепить:</div>
<svg style="left:1020px;top:541px" width="75" height="15" viewBox="1020 541 75 15" fill="none" stroke="#b4b4b4" stroke-width=".9">
 <rect x="1025.200" y="544.800" width="7.400" height="7.400"/><path d="M1028.900 544.800V552.200M1025.200 548.500H1032.600"/><rect x="1025.600" y="545.200" width="3.300" height="3.300" fill="#9c9c9c" stroke="none"/><rect x="1028.900" y="548.500" width="3.300" height="3.300" fill="#9c9c9c" stroke="none"/>
 <path d="M1047.800 544L1043.400 550" stroke-width="1.500"/><path d="M1040.600 553.200C1040.800 551.400 1041.600 550.400 1043 550.400C1043.800 551.600 1042.800 553.200 1040.600 553.200Z" fill="#b4b4b4" stroke="none"/>
 <path d="M1058.500 544.200V552.800M1054.200 548.500H1062.800M1057.200 545.600L1058.500 544.200L1059.800 545.600M1057.200 551.400L1058.500 552.800L1059.800 551.400M1055.600 547.200L1054.200 548.500L1055.600 549.800M1061.400 547.200L1062.800 548.500L1061.400 549.800" stroke-width=".8"/>
 <path d="M1071 544V551.200H1078.200M1069 546H1076.200V553.200" stroke-width=".9"/><path d="M1076.400 544.400L1078 546" stroke-width=".8"/>
 <rect x="1084.600" y="548" width="6.400" height="5" fill="#b4b4b4" stroke="none"/><path d="M1086 548V546.600A1.800 1.800 0 0 1 1089.600 546.600V548" stroke-width="1"/>
</svg>
<div class="t" style="transform:scaleX(0.876);transform-origin:0 0;left:1136px;top:543.500px;font-size:7.300px;color:#777">Заливка:</div>
<div class="a" style="left:1166px;top:542.500px;width:23px;height:11.500px;background:#4e4e4e;border:1px solid #494949"></div>
<div class="t" style="transform:scaleX(0.966);transform-origin:0 0;left:1169.500px;top:543.500px;font-size:7px;color:#6a6a6a">100%</div>
<div class="a" style="left:1190.500px;top:542.500px;width:9px;height:11.500px;background:#4e4e4e;border:1px solid #494949"></div>
<!-- layer list -->
<div class="a" style="left:981.5px;top:560.500px;width:222px;height:115px;background:#4f4f4f"></div>
<div class="a" style="left:981.5px;top:560.500px;width:19.500px;height:115px;background:#4c4c4c"></div>
<div class="a" style="left:1001.500px;top:561.500px;width:190.500px;height:17.500px;background:#696969"></div>
<div class="a" style="left:1001.500px;top:579.500px;width:190.500px;height:96px;background:#505050"></div>
<div class="a" style="left:981.5px;top:579px;width:210.500px;height:1px;background:#474747"></div>
<div class="a" style="left:981.5px;top:597px;width:210.500px;height:1px;background:#474747"></div>
<div class="a" style="left:981.5px;top:613.400px;width:210.500px;height:1px;background:#474747"></div>
<div class="a" style="left:981.5px;top:630px;width:210.500px;height:1px;background:#474747"></div>
<div class="a" style="left:981.5px;top:647.500px;width:210.500px;height:1px;background:#474747"></div>
<div class="a" style="left:981.5px;top:665px;width:210.500px;height:1px;background:#474747"></div>
<div class="a" style="left:1001px;top:560.500px;width:1px;height:115px;background:#474747"></div>
<!-- scrollbar -->
<div class="a" style="left:1192px;top:560.500px;width:10.500px;height:115px;background:#4d4d4d"></div>
<div class="a" style="left:1193.500px;top:579.500px;width:8px;height:10px;background:#6a6a6a"></div>
<svg style="left:1194.500px;top:564px" width="6" height="4" viewBox="0 0 6 4"><path d="M.5 3.300L3 .8L5.500 3.300" fill="none" stroke="#808080" stroke-width=".9"/></svg>
<svg style="left:1194.500px;top:666.500px" width="6" height="4" viewBox="0 0 6 4"><path d="M.5.7L3 3.200L5.500.7" fill="none" stroke="#808080" stroke-width=".9"/></svg>
<!-- row 1 -->
<div class="a" style="left:986px;top:566px;width:10px;height:9px;border-left:1px solid #5a5a5a;border-bottom:1px solid #5a5a5a;opacity:.6"></div>
<svg style="left:1022px;top:562px" width="27" height="17" viewBox="1022 562 27 17">
<path d="M1023.300 567V563.300H1027.500M1043 563.300H1047.200V567M1047.200 574V577.700H1043M1027.500 577.700H1023.300V574" fill="none" stroke="#f2f2f2" stroke-width="1"/>
<rect x="1025" y="565" width="20.500" height="11" fill="#fff" stroke="#2c2c2c" stroke-width="1"/>
<g fill="#c8c8c8"><rect x="1025.500" y="565.500" width="2.700" height="2.500"/><rect x="1030.900" y="565.500" width="2.700" height="2.500"/><rect x="1028.200" y="568" width="2.700" height="2.500"/><rect x="1033.600" y="568" width="2.700" height="2.500"/><rect x="1025.500" y="570.500" width="2.700" height="2.500"/><rect x="1030.900" y="570.500" width="2.700" height="2.500"/><rect x="1028.200" y="573" width="2.700" height="2.500"/><rect x="1033.600" y="573" width="2.700" height="2.500"/></g>
<rect x="1036.300" y="565.500" width="8.700" height="10" fill="#4a4a4a"/>
<rect x="1038.300" y="569.300" width="5.400" height="5.200" fill="#6a6a6a" stroke="#e8e8e8" stroke-width=".9"/>
<rect x="1037.200" y="567.600" width="2.600" height="2.600" fill="#e8e8e8"/>
</svg>
<div class="t" style="transform:scaleX(0.919);transform-origin:0 0;left:1051.700px;top:566.500px;font-size:7.300px;color:#ececec">Прямоугольник 2</div>
<!-- row 2 -->
<svg style="left:985.500px;top:585.500px" width="10.500" height="6.300" viewBox="0 0 11 7"><path d="M.4 3.500C2.400 .4 8.600 .4 10.600 3.500C8.600 6.600 2.400 6.600 .4 3.500Z" fill="#e8e8e8"/><circle cx="5.500" cy="3.500" r="1.900" fill="#4b4b4b"/></svg>
<svg style="left:1014px;top:586.500px" width="6" height="4" viewBox="0 0 6 4"><path d="M.4.4L3 3.200L5.600.4" fill="none" stroke="#bcbcbc" stroke-width=".9"/></svg>
<svg style="left:1021.700px;top:584px" width="10.300" height="7.800" viewBox="0 0 11 9" preserveAspectRatio="none"><path d="M.3.800H4L5 2H10.700V8.700H.3Z" fill="#dcdcdc"/><path d="M.3 3.300H10.700" stroke="#535353" stroke-width=".7"/></svg>
<div class="t" style="transform:scaleX(0.917);transform-origin:0 0;left:1039.600px;top:584px;font-size:7.300px;color:#e0e0e0">карта</div>
<!-- row 3 -->
<div class="a" style="left:986px;top:601px;width:10px;height:9px;border-left:1px solid #5a5a5a;border-bottom:1px solid #5a5a5a;opacity:.5"></div>
<svg style="left:1025px;top:602px" width="4" height="7" viewBox="0 0 4 7"><path d="M.5.5L3.300 3.500L.5 6.500" fill="none" stroke="#bcbcbc" stroke-width=".9"/></svg>
<svg style="left:1032px;top:601px" width="10.300" height="7.800" viewBox="0 0 11 9" preserveAspectRatio="none"><path d="M.3.800H4L5 2H10.700V8.700H.3Z" fill="#dcdcdc"/><path d="M.3 3.300H10.700" stroke="#535353" stroke-width=".7"/></svg>
<div class="t" style="transform:scaleX(0.897);transform-origin:0 0;left:1049.700px;top:600.500px;font-size:7.300px;color:#e0e0e0">плашка выбора</div>
<!-- row 4 -->
<svg style="left:985.500px;top:618.500px" width="10.500" height="6.300" viewBox="0 0 11 7"><path d="M.4 3.500C2.400 .4 8.600 .4 10.600 3.500C8.600 6.600 2.400 6.600 .4 3.500Z" fill="#e8e8e8"/><circle cx="5.500" cy="3.500" r="1.900" fill="#4b4b4b"/></svg>
<svg style="left:1025px;top:619.500px" width="6" height="4" viewBox="0 0 6 4"><path d="M.4.4L3 3.200L5.600.4" fill="none" stroke="#bcbcbc" stroke-width=".9"/></svg>
<svg style="left:1032.500px;top:617.500px" width="11" height="9" viewBox="0 0 11 9"><path d="M.5 1H4L5 2.200H10.500V8.500H.5Z" fill="none" stroke="#dcdcdc" stroke-width=".9"/></svg>
<div class="t" style="transform:scaleX(0.917);transform-origin:0 0;left:1050px;top:617.500px;font-size:7.300px;color:#e0e0e0">карта</div>
<!-- row 5 -->
<svg style="left:985.500px;top:635.500px" width="10.500" height="6.300" viewBox="0 0 11 7"><path d="M.4 3.500C2.400 .4 8.600 .4 10.600 3.500C8.600 6.600 2.400 6.600 .4 3.500Z" fill="#e8e8e8"/><circle cx="5.500" cy="3.500" r="1.900" fill="#4b4b4b"/></svg>
<svg style="left:1043.500px;top:634.500px" width="10.300" height="7.800" viewBox="0 0 11 9" preserveAspectRatio="none"><path d="M.3.800H4L5 2H10.700V8.700H.3Z" fill="#dcdcdc"/><path d="M.3 3.300H10.700" stroke="#535353" stroke-width=".7"/></svg>
<div class="t" style="left:1062px;top:634px;font-size:7.300px;color:#e0e0e0">1 копия</div>
<!-- row 6 -->
<svg style="left:985.500px;top:653px" width="10.500" height="6.300" viewBox="0 0 11 7"><path d="M.4 3.500C2.400 .4 8.600 .4 10.600 3.500C8.600 6.600 2.400 6.600 .4 3.500Z" fill="#e8e8e8"/><circle cx="5.500" cy="3.500" r="1.900" fill="#4b4b4b"/></svg>
<svg style="left:1055.500px;top:652.500px" width="9" height="8" viewBox="0 0 9 8"><path d="M4.500.3L8.800 7.700H.2Z" fill="#f0c428"/><path d="M4.500 2.800V5.300M4.500 6V6.900" stroke="#3a3000" stroke-width=".9"/></svg>
<div class="t" style="left:1074.500px;top:651.500px;font-size:7.300px;color:#e0e0e0">3</div>
<!-- row 7 -->
<svg style="left:985.500px;top:670.500px" width="11" height="5" viewBox="0 0 11 5"><path d="M.4 3.500C2.400 .4 8.600 .4 10.600 3.500V5H.4Z" fill="#e8e8e8"/><circle cx="5.500" cy="3.800" r="1.900" fill="#4b4b4b"/></svg>
<div class="a" style="left:1047px;top:669px;width:20px;height:6.500px;background:#f4f4f4"></div>
<svg style="left:1047px;top:669px" width="12" height="6.500" viewBox="0 0 12 6.500" fill="#c4c4c4"><rect x="0" y="2.600" width="3" height="2.600"/><rect x="3" y="0" width="3" height="2.600"/><rect x="6" y="2.600" width="3" height="2.600"/><rect x="9" y="0" width="3" height="2.600"/><rect x="3" y="5.200" width="3" height="1.300"/><rect x="9" y="5.200" width="3" height="1.300"/></svg>
<div class="a" style="left:1060.500px;top:671.500px;width:5px;height:4px;border:1px solid #fff;background:#5a5a5a"></div>
<div class="t" style="left:1074px;top:670.300px;font-size:7.300px;color:#e0e0e0;height:5.500px;overflow:hidden">прозр.под фон</div>
<div class="t" style="left:1176px;top:669px;font-size:7.600px;font-style:italic;color:#d8d8d8;height:6.500px;overflow:hidden;font-family:'Liberation Serif',serif">fx</div>
<svg style="left:1186.500px;top:671.500px" width="5" height="3" viewBox="0 0 5 3"><path d="M.3 2.700L2.500.5L4.700 2.700" fill="none" stroke="#b0b0b0" stroke-width=".8"/></svg>
<!-- bottom bar -->
<div class="a" style="left:981.5px;top:675.500px;width:222px;height:16.500px;background:#535353"></div>
<svg style="left:1060px;top:676px" width="130" height="16" viewBox="1060 676 130 16" fill="none" stroke="#dcdcdc" stroke-width="1">
 <g stroke="#7c7c7c" stroke-width=".9"><circle cx="1070.800" cy="683.800" r="2.200"/><circle cx="1074.600" cy="683.800" r="2.200"/></g>
 <text x="1086.600" y="687" class="fx" fill="#e4e4e4" stroke="none">fx</text><rect x="1094.200" y="687.400" width="1.200" height="1.200" fill="#dcdcdc" stroke="none"/>
 <rect x="1104.200" y="680.600" width="8.600" height="6.800" fill="#e4e4e4" stroke="none"/><circle cx="1108.500" cy="684" r="2.200" fill="#444" stroke="none"/>
 <circle cx="1126.800" cy="683.800" r="3.700"/><path d="M1126.800 680.100A3.700 3.700 0 0 1 1126.800 687.500Z" fill="#dcdcdc" stroke="none" transform="rotate(45 1126.800 683.800)"/><rect x="1130.600" y="687.600" width="1.200" height="1.200" fill="#dcdcdc" stroke="none"/>
 <path d="M1139.800 680.400H1143.200L1144.200 681.600H1149V687.600H1139.800Z" fill="#dcdcdc" stroke="none"/>
 <path d="M1158.600 680.800H1166V687.800H1160.800L1158.600 685.600Z M1158.600 685.600H1160.800V687.800" stroke-width=".9"/>
 <path d="M1176.600 682.200H1183.400M1178.800 682V680.600H1181.200V682M1177.400 682.400V688.200H1182.600V682.400M1179.200 683.800V686.800M1180.800 683.800V686.800" stroke-width=".9"/>
</svg>
<!-- ===== watermark ===== -->
<svg style="left:770px;top:600px" width="80" height="76" viewBox="770 600 80 76">
<defs>
<radialGradient id="gl" cx="0.45" cy="0.3" r="0.75"><stop offset="0" stop-color="#38c8f4"/><stop offset=".35" stop-color="#1b82e0"/><stop offset=".75" stop-color="#0f4cc0"/><stop offset="1" stop-color="#0a3690"/></radialGradient>
<radialGradient id="gr" cx="0.4" cy="0.3" r="0.8"><stop offset="0" stop-color="#58e030"/><stop offset=".5" stop-color="#18b41c"/><stop offset="1" stop-color="#0c8a18"/></radialGradient>
<clipPath id="gc"><circle cx="808.4" cy="637.8" r="31.200"/></clipPath>
</defs>
<circle cx="808.4" cy="637.8" r="31.500" fill="url(#gl)"/>
<g clip-path="url(#gc)">
<path d="M779 648C776 630 784 613 798 608C806 605.500 814 606 820 609C813 611 808 615 803 620C798 625 797 631 792 636C788 641 784 647 779 648Z" fill="url(#gr)"/>
<path d="M800 612C804 609 809 609.500 811 612C808 616 802 619 798 623C797 618 797.500 614.500 800 612Z" fill="#f0f8a0" opacity=".8"/>
<path d="M806 618C812 611 822 609 829 613C822 615 815 619 810 624Z" fill="#58e0ff" opacity=".75"/>
<path d="M831 622C837 626 841 634 840 644C838 650 834 652 831 650C829 644 830 636 829 630Z" fill="url(#gr)"/>
<path d="M792 652C798 648 806 650 812 654C820 658 824 662 820 667C812 671 802 670 796 664C793 660 791 656 792 652Z" fill="url(#gr)"/>
</g>
<circle cx="808.4" cy="637.8" r="30.700" fill="none" stroke="#1060c8" stroke-width="1.600" opacity=".8"/>
<!-- plane -->
<path d="M781.300 638.500L829.600 620.400L821.400 660.800L808 651L800.600 657.800L797.800 645.600Z" fill="#f4f8fc"/>
<path d="M797.800 645.600L820 627L803.600 648.400L800.600 657.800Z" fill="#c8d8e8"/>
<path d="M803.600 648.400L808 651L800.600 657.800Z" fill="#a8bcd0"/>
</svg>
<svg style="left:840px;top:596px" width="440" height="96" viewBox="840 596 440 96">
<defs><filter id="ws" x="-3%" y="-15%" width="106%" height="130%" color-interpolation-filters="sRGB">
<feGaussianBlur in="SourceAlpha" stdDeviation="1.6" result="b1"/>
<feComponentTransfer in="b1" result="edge"><feFuncA type="linear" slope="18" intercept="-1.5"/></feComponentTransfer>
<feFlood flood-color="#0a0a0a" result="blk"/>
<feComposite in="blk" in2="edge" operator="in" result="outline"/>
<feGaussianBlur in="edge" stdDeviation="1.2" result="b2"/>
<feComponentTransfer in="b2" result="shadow"><feFuncA type="linear" slope=".45" intercept="0"/></feComponentTransfer>
<feMerge><feMergeNode in="shadow"/><feMergeNode in="outline"/><feMergeNode in="SourceGraphic"/></feMerge>
</filter></defs>
<text x="852.8" y="651.700" class="wm" fill="#fff" stroke="#fff" stroke-width="1.800" stroke-linejoin="round" filter="url(#ws)">telegrammy.net</text>
</svg>
<div class="a" style="left:874.5px;top:600px;width:1px;height:81.5px;background:#7f90d8;opacity:.35"></div>
</body>
</html>
